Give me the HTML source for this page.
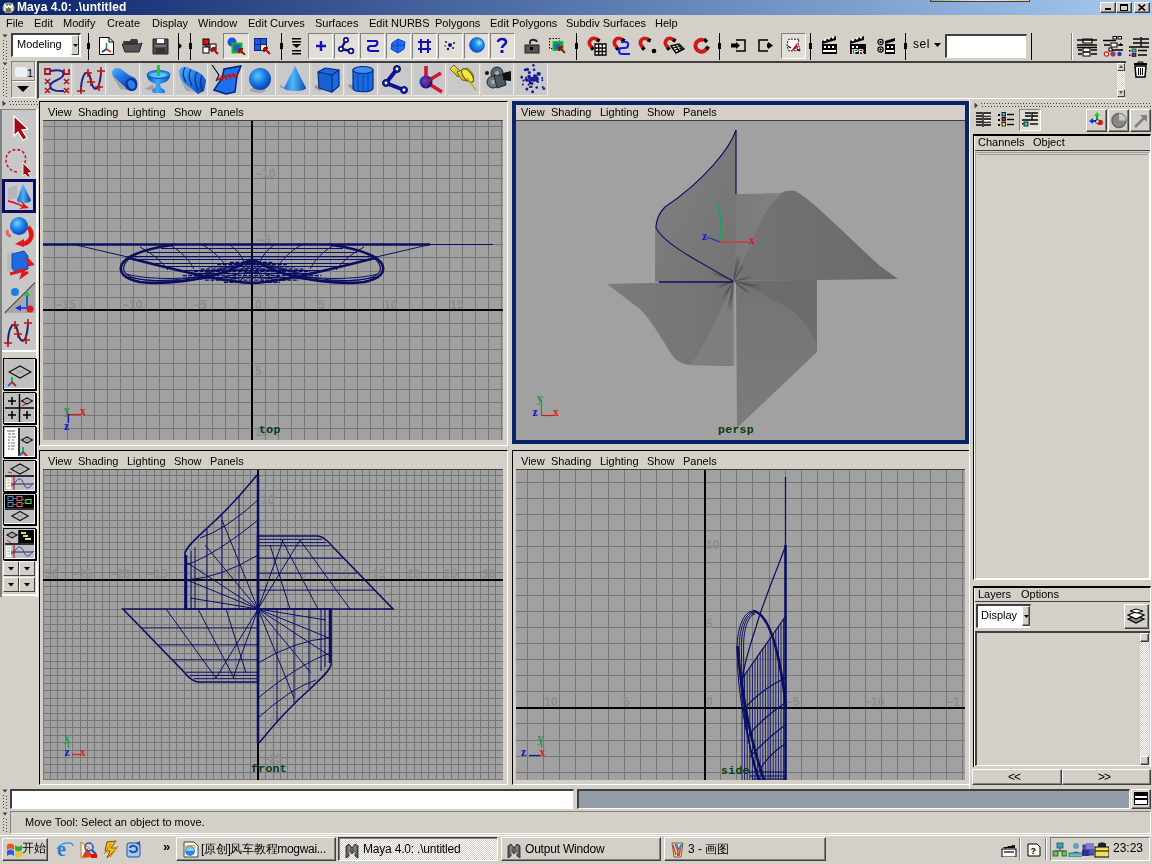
<!DOCTYPE html><html><head><meta charset="utf-8"><style>
*{margin:0;padding:0;box-sizing:border-box}
html,body{width:1152px;height:864px;overflow:hidden;background:#D4D0C8;font-family:"Liberation Sans",sans-serif;font-size:11px;color:#000;-webkit-font-smoothing:antialiased}
.t{position:absolute;white-space:nowrap;line-height:13px;will-change:transform}
.vm{position:absolute;white-space:nowrap;font-size:11px;line-height:13px}
</style></head><body><div style="position:absolute;left:0px;top:0px;width:1152px;height:15px;background:linear-gradient(to right,#0A246A 0%,#A6CAF0 100%)"></div><svg style="position:absolute;left:2px;top:2px;" width="13" height="11" viewBox="0 0 13 11"><ellipse cx="6.5" cy="6" rx="5.5" ry="5" fill="#6A7048" stroke="#C8CCB0" stroke-width="1"/><path d="M3 9V3L5 5.5L6.5 3.5L8 5.5L10 3V9" stroke="#fff" stroke-width="1.5" fill="none"/></svg><div class="t" style="left:17px;top:1px;color:#fff;font-weight:bold;font-size:12px;letter-spacing:0.1px">Maya 4.0: .\untitled</div><div style="position:absolute;left:930px;top:0px;width:100px;height:2px;background:linear-gradient(to right,#8AB080,#F0E8D0,#E0C8A0);border:1px solid #404040;border-top:none"></div><div style="position:absolute;left:1100px;top:2px;width:16px;height:11px;background:#D4D0C8;border-top:1px solid #fff;border-left:1px solid #fff;border-right:1px solid #404040;border-bottom:1px solid #404040;box-shadow:inset -1px -1px 0 #808080"></div><div style="position:absolute;left:1116px;top:2px;width:16px;height:11px;background:#D4D0C8;border-top:1px solid #fff;border-left:1px solid #fff;border-right:1px solid #404040;border-bottom:1px solid #404040;box-shadow:inset -1px -1px 0 #808080"></div><div style="position:absolute;left:1134px;top:2px;width:16px;height:11px;background:#D4D0C8;border-top:1px solid #fff;border-left:1px solid #fff;border-right:1px solid #404040;border-bottom:1px solid #404040;box-shadow:inset -1px -1px 0 #808080"></div><svg style="position:absolute;left:1105px;top:8px;" width="6" height="2" viewBox="0 0 6 2"><rect width="6" height="2" fill="#000"/></svg><svg style="position:absolute;left:1120px;top:4px;" width="8" height="7" viewBox="0 0 8 7"><rect x="0.5" y="0.5" width="7" height="6" fill="none" stroke="#000"/><rect x="0" y="0" width="8" height="2" fill="#000"/></svg><svg style="position:absolute;left:1138px;top:4px;" width="8" height="7" viewBox="0 0 8 7"><path d="M0.5 0.5L7 6.5M7 0.5L0.5 6.5" stroke="#000" stroke-width="1.6"/></svg><div class="t" style="left:6px;top:17px;">File</div><div class="t" style="left:34px;top:17px;">Edit</div><div class="t" style="left:63px;top:17px;">Modify</div><div class="t" style="left:107px;top:17px;">Create</div><div class="t" style="left:152px;top:17px;">Display</div><div class="t" style="left:198px;top:17px;">Window</div><div class="t" style="left:248px;top:17px;">Edit Curves</div><div class="t" style="left:315px;top:17px;">Surfaces</div><div class="t" style="left:369px;top:17px;">Edit NURBS</div><div class="t" style="left:435px;top:17px;">Polygons</div><div class="t" style="left:490px;top:17px;">Edit Polygons</div><div class="t" style="left:566px;top:17px;">Subdiv Surfaces</div><div class="t" style="left:655px;top:17px;">Help</div><svg style="position:absolute;left:2px;top:34px;" width="6" height="26" viewBox="0 0 6 26"><path d="M0.5 0.5H5.5L3 3.5Z" fill="#404040"/><rect x="1" y="6" width="1" height="1" fill="#404040"/><rect x="4" y="7" width="1" height="1" fill="#404040"/><rect x="1" y="9" width="1" height="1" fill="#404040"/><rect x="4" y="10" width="1" height="1" fill="#404040"/><rect x="1" y="12" width="1" height="1" fill="#404040"/><rect x="4" y="13" width="1" height="1" fill="#404040"/><rect x="1" y="15" width="1" height="1" fill="#404040"/><rect x="4" y="16" width="1" height="1" fill="#404040"/><rect x="1" y="18" width="1" height="1" fill="#404040"/><rect x="4" y="19" width="1" height="1" fill="#404040"/><rect x="1" y="21" width="1" height="1" fill="#404040"/><rect x="4" y="22" width="1" height="1" fill="#404040"/><rect x="1" y="24" width="1" height="1" fill="#404040"/><rect x="4" y="25" width="1" height="1" fill="#404040"/></svg><div style="position:absolute;left:11px;top:33px;width:70px;height:24px;background:#fff;border-top:2px solid #404040;border-left:2px solid #404040;border-bottom:1px solid #fff;border-right:1px solid #fff"></div><div style="position:absolute;left:71px;top:35px;width:8px;height:20px;background:#D4D0C8;border-top:1px solid #fff;border-left:1px solid #fff;border-right:1px solid #404040;border-bottom:1px solid #404040"></div><svg style="position:absolute;left:73px;top:44px;" width="5" height="3" viewBox="0 0 5 3"><path d="M0 0H5L2.5 3Z" fill="#000"/></svg><div class="t" style="left:17px;top:38px;font-size:11px">Modeling</div><svg style="position:absolute;left:87px;top:33px;" width="3" height="27" viewBox="0 0 3 27"><rect x="1" y="0" width="1" height="27" fill="#000"/><rect x="0" y="10" width="3" height="6" fill="#000"/></svg><svg style="position:absolute;left:99px;top:37px;" width="15" height="18" viewBox="0 0 15 18"><path d="M0.5 0.5H10L14.5 5V17.5H0.5Z" fill="#fff" stroke="#000"/><path d="M10 0.5V5H14.5" fill="none" stroke="#000"/><path d="M7.5 12V6" stroke="#2A8A4A" stroke-width="1.5"/><path d="M7.5 12L3 15" stroke="#2030A0" stroke-width="1.8"/><path d="M7.5 12L12 15" stroke="#D04020" stroke-width="1.8"/></svg><svg style="position:absolute;left:122px;top:38px;" width="21" height="15" viewBox="0 0 21 15"><path d="M1 3H8L9 1H15L16 3V13H3Z" fill="#3A3A3A"/><path d="M0 6H17L20 5L17 14H3Z" fill="#555" stroke="#222" stroke-width="1"/></svg><svg style="position:absolute;left:152px;top:38px;" width="17" height="17" viewBox="0 0 17 17"><path d="M1 1H16V16H1Z" fill="#4A4A4A" stroke="#222"/><rect x="5" y="1" width="7" height="4" fill="#fff"/><rect x="3" y="7" width="11" height="2" fill="#777"/><rect x="4" y="10" width="9" height="5" fill="#333"/></svg><svg style="position:absolute;left:178px;top:33px;" width="5" height="27" viewBox="0 0 5 27"><rect x="0" y="0" width="1" height="27" fill="#000"/><path d="M1 10L4 13L1 16Z" fill="#000"/></svg><svg style="position:absolute;left:189px;top:33px;" width="3" height="27" viewBox="0 0 3 27"><rect x="1" y="0" width="1" height="27" fill="#000"/><rect x="0" y="10" width="3" height="6" fill="#000"/></svg><svg style="position:absolute;left:202px;top:38px;" width="18" height="17" viewBox="0 0 18 17"><rect x="1" y="1" width="6" height="6" fill="#E01010" stroke="#000"/><path d="M4 7V9H12V7" stroke="#000" fill="none"/><rect x="1" y="9" width="6" height="6" fill="#fff" stroke="#000"/><rect x="8" y="6" width="6" height="6" fill="#fff" stroke="#000"/><path d="M10 10L16 16M10 10V14M10 10H14" stroke="#A01010" stroke-width="2" fill="none"/></svg><div style="position:absolute;left:223px;top:33px;width:26px;height:26px;background:#E2DFD9;border-top:1px solid #808080;border-left:1px solid #808080;border-right:1px solid #fff;border-bottom:1px solid #fff"></div><svg style="position:absolute;left:227px;top:37px;" width="19" height="18" viewBox="0 0 19 18"><circle cx="5" cy="5" r="4.5" fill="#2050E0"/><rect x="5.5" y="6.5" width="9" height="9" fill="#2060D0" stroke="#10C010" stroke-width="2"/><path d="M12 12L18 18M12 12V16M12 12H16" stroke="#A01010" stroke-width="2" fill="none"/></svg><svg style="position:absolute;left:254px;top:38px;" width="17" height="17" viewBox="0 0 17 17"><rect x="0.5" y="0.5" width="12" height="12" fill="#1A5AE0" stroke="#102080"/><path d="M6.5 0.5V12.5M0.5 6.5H12.5" stroke="#102080"/><rect x="7" y="7" width="5" height="5" fill="#F0F070"/><path d="M10 10L16 16M10 10V14M10 10H14" stroke="#A01010" stroke-width="2" fill="none"/></svg><svg style="position:absolute;left:280px;top:33px;" width="3" height="27" viewBox="0 0 3 27"><rect x="1" y="0" width="1" height="27" fill="#000"/><rect x="0" y="10" width="3" height="6" fill="#000"/></svg><svg style="position:absolute;left:292px;top:38px;" width="10" height="17" viewBox="0 0 10 17"><rect x="0" y="0" width="9" height="1.5" fill="#000"/><rect x="0" y="3" width="9" height="1.5" fill="#000"/><path d="M0 6H9L4.5 10Z" fill="#000"/><rect x="0" y="12" width="9" height="1.5" fill="#000"/><rect x="0" y="15" width="9" height="1.5" fill="#000"/></svg><div style="position:absolute;left:308px;top:33px;width:25px;height:26px;background:#E2DFD9;border-top:1px solid #808080;border-left:1px solid #808080;border-right:1px solid #fff;border-bottom:1px solid #fff"></div><div style="position:absolute;left:334px;top:33px;width:25px;height:26px;background:#E2DFD9;border-top:1px solid #808080;border-left:1px solid #808080;border-right:1px solid #fff;border-bottom:1px solid #fff"></div><div style="position:absolute;left:360px;top:33px;width:25px;height:26px;background:#E2DFD9;border-top:1px solid #808080;border-left:1px solid #808080;border-right:1px solid #fff;border-bottom:1px solid #fff"></div><div style="position:absolute;left:386px;top:33px;width:25px;height:26px;background:#E2DFD9;border-top:1px solid #808080;border-left:1px solid #808080;border-right:1px solid #fff;border-bottom:1px solid #fff"></div><div style="position:absolute;left:412px;top:33px;width:25px;height:26px;background:#E2DFD9;border-top:1px solid #808080;border-left:1px solid #808080;border-right:1px solid #fff;border-bottom:1px solid #fff"></div><div style="position:absolute;left:438px;top:33px;width:25px;height:26px;background:#E2DFD9;border-top:1px solid #808080;border-left:1px solid #808080;border-right:1px solid #fff;border-bottom:1px solid #fff"></div><div style="position:absolute;left:464px;top:33px;width:25px;height:26px;background:#E2DFD9;border-top:1px solid #808080;border-left:1px solid #808080;border-right:1px solid #fff;border-bottom:1px solid #fff"></div><div style="position:absolute;left:490px;top:33px;width:25px;height:26px;background:#E2DFD9;border-top:1px solid #808080;border-left:1px solid #808080;border-right:1px solid #fff;border-bottom:1px solid #fff"></div><svg style="position:absolute;left:314px;top:38px;" width="14" height="16" viewBox="0 0 14 16"><path d="M7 3V13M2 8H12" stroke="#1010C0" stroke-width="2.4"/></svg><svg style="position:absolute;left:338px;top:37px;" width="17" height="18" viewBox="0 0 17 18"><path d="M8 3L3 12L13 14" stroke="#101080" stroke-width="2.5" fill="none"/><circle cx="8" cy="3" r="2.2" fill="#fff" stroke="#101080" stroke-width="1.8"/><circle cx="3" cy="12" r="2.2" fill="#fff" stroke="#101080" stroke-width="1.8"/><circle cx="13" cy="14" r="2.4" fill="#fff" stroke="#101080" stroke-width="1.8"/></svg><svg style="position:absolute;left:365px;top:38px;" width="15" height="16" viewBox="0 0 15 16"><path d="M2 3H11C13 3 13 8 9 8H6C2 8 2 13 6 13H14" stroke="#1010C0" stroke-width="2.2" fill="none"/></svg><svg style="position:absolute;left:390px;top:38px;" width="16" height="16" viewBox="0 0 16 16"><path d="M2 5L8 1L15 4L14 11L8 15L1 11Z" fill="#1A70F0" stroke="#0A40C0"/><path d="M8 1L7 15M1.5 8L14.5 7" stroke="#0A40C0" stroke-width="0.8"/></svg><svg style="position:absolute;left:417px;top:38px;" width="15" height="16" viewBox="0 0 15 16"><path d="M4 1V15M11 1V15M1 4H14M1 11H14" stroke="#1010C0" stroke-width="2"/></svg><svg style="position:absolute;left:443px;top:39px;" width="14" height="13" viewBox="0 0 14 13"><circle cx="7" cy="6" r="2" fill="#101080"/><circle cx="3" cy="3" r="1" fill="#101080"/><circle cx="11" cy="4" r="1" fill="#101080"/><circle cx="5" cy="10" r="1.2" fill="#101080"/><circle cx="10" cy="9" r="1" fill="#101080"/><circle cx="2" cy="7" r="0.8" fill="#101080"/></svg><svg style="position:absolute;left:469px;top:37px;" width="16" height="16" viewBox="0 0 16 16"><defs><radialGradient id="sph" cx="0.65" cy="0.35" r="0.7"><stop offset="0" stop-color="#A0F0FF"/><stop offset="0.35" stop-color="#20A0F0"/><stop offset="1" stop-color="#0A50D0"/></radialGradient></defs><circle cx="8" cy="8" r="7.3" fill="url(#sph)" stroke="#0A3AB0" stroke-width="0.8"/></svg><svg style="position:absolute;left:496px;top:37px;" width="12" height="18" viewBox="0 0 12 18"><path d="M2 5C2 1 10 1 10 5C10 8 6 8 6 11" stroke="#1010C0" stroke-width="2.6" fill="none"/><rect x="4.5" y="13" width="3" height="3" fill="#1010C0"/></svg><svg style="position:absolute;left:524px;top:38px;" width="16" height="16" viewBox="0 0 16 16"><path d="M6 6V4C6 1 12 1 13 4" stroke="#222" stroke-width="1.8" fill="none"/><rect x="1" y="7" width="14" height="8" fill="#555" stroke="#222"/><rect x="6" y="9" width="3" height="3" fill="#000"/></svg><svg style="position:absolute;left:549px;top:38px;" width="17" height="17" viewBox="0 0 17 17"><rect x="0.5" y="0.5" width="10" height="10" fill="none" stroke="#000" stroke-dasharray="1.5 1.5"/><rect x="4" y="3.5" width="10" height="9" fill="#1A9A4A" stroke="#10D030"/><rect x="6" y="6" width="5" height="5" fill="#2060C0"/><path d="M10 9L16 15M10 9V13M10 9H14" stroke="#A01010" stroke-width="2" fill="none"/></svg><svg style="position:absolute;left:575px;top:33px;" width="3" height="27" viewBox="0 0 3 27"><rect x="1" y="0" width="1" height="27" fill="#000"/><rect x="0" y="10" width="3" height="6" fill="#000"/></svg><svg style="position:absolute;left:587px;top:36px;" width="22" height="20" viewBox="0 0 22 20"><g transform="rotate(-30 7 7)"><path d="M3 10L2.5 7A4.5 4.5 0 0 1 10.5 4L12 6.5" stroke="#D01818" stroke-width="3.6" fill="none" stroke-linecap="butt"/><path d="M2.6 9.5L3 12.5M11.3 5.5L13 8" stroke="#000" stroke-width="3.6"/></g><path d="M8 8H19V19H8ZM8 12H19M8 15.5H19M11.7 8V19M15.3 8V19" stroke="#000" stroke-width="1.3" fill="#fff"/></svg><svg style="position:absolute;left:612px;top:36px;" width="20" height="21" viewBox="0 0 20 21"><g transform="rotate(-30 7 7)"><path d="M3 10L2.5 7A4.5 4.5 0 0 1 10.5 4L12 6.5" stroke="#D01818" stroke-width="3.6" fill="none" stroke-linecap="butt"/><path d="M2.6 9.5L3 12.5M11.3 5.5L13 8" stroke="#000" stroke-width="3.6"/></g><path d="M9 6H14C17 6 17 12 13 12H10C6 12 6 18 10 18H18" stroke="#1020F0" stroke-width="2.2" fill="none"/></svg><svg style="position:absolute;left:638px;top:36px;" width="20" height="20" viewBox="0 0 20 20"><g transform="rotate(-30 7 7)"><path d="M3 10L2.5 7A4.5 4.5 0 0 1 10.5 4L12 6.5" stroke="#D01818" stroke-width="3.6" fill="none" stroke-linecap="butt"/><path d="M2.6 9.5L3 12.5M11.3 5.5L13 8" stroke="#000" stroke-width="3.6"/></g><circle cx="16" cy="15" r="2.3" fill="#000"/></svg><svg style="position:absolute;left:663px;top:36px;" width="22" height="21" viewBox="0 0 22 21"><g transform="rotate(-30 7 7)"><path d="M3 10L2.5 7A4.5 4.5 0 0 1 10.5 4L12 6.5" stroke="#D01818" stroke-width="3.6" fill="none" stroke-linecap="butt"/><path d="M2.6 9.5L3 12.5M11.3 5.5L13 8" stroke="#000" stroke-width="3.6"/></g><path d="M8 10L16 8L21 13L13 17Z" fill="#fff" stroke="#000" stroke-width="1.5"/><path d="M10 12L18 10M12 14L20 12M12 9L16 15M15 8.5L19 14" stroke="#000" stroke-width="1.2"/></svg><svg style="position:absolute;left:692px;top:37px;" width="18" height="18" viewBox="0 0 18 18"><path d="M14 5A6 6 0 1 0 14 13" stroke="#D01818" stroke-width="4" fill="none" transform="rotate(-30 9 9)"/><path d="M12 2L15 5M14 10L17 12" stroke="#111" stroke-width="3.5"/></svg><svg style="position:absolute;left:718px;top:33px;" width="3" height="27" viewBox="0 0 3 27"><rect x="1" y="0" width="1" height="27" fill="#000"/><rect x="0" y="10" width="3" height="6" fill="#000"/></svg><svg style="position:absolute;left:731px;top:39px;" width="15" height="13" viewBox="0 0 15 13"><path d="M5 1H14V12H5" fill="none" stroke="#000" stroke-width="1.5"/><rect x="0" y="4.5" width="6" height="4" fill="#000"/><path d="M5 3L9 6.5L5 10Z" fill="#000"/></svg><svg style="position:absolute;left:758px;top:39px;" width="16" height="13" viewBox="0 0 16 13"><path d="M10 1H1V12H10" fill="none" stroke="#000" stroke-width="1.5"/><rect x="9" y="4.5" width="3" height="4" fill="#000"/><path d="M10 3L15 6.5L10 10Z" fill="#000"/></svg><div style="position:absolute;left:781px;top:33px;width:25px;height:26px;background:#E2DFD9;border-top:1px solid #808080;border-left:1px solid #808080;border-right:1px solid #fff;border-bottom:1px solid #fff"></div><svg style="position:absolute;left:785px;top:37px;" width="17" height="18" viewBox="0 0 17 18"><path d="M3 3C5 1 11 3 14 2L13 6L15 13L4 14L2 9Z" fill="#fff" stroke="#111" stroke-width="1" stroke-dasharray="2 1"/><path d="M6 14L12 6L13 11Z" fill="#E01020"/><path d="M3 9L6 11M12 12L15 14" stroke="#111" stroke-width="1.5"/></svg><svg style="position:absolute;left:809px;top:33px;" width="3" height="27" viewBox="0 0 3 27"><rect x="1" y="0" width="1" height="27" fill="#000"/><rect x="0" y="10" width="3" height="6" fill="#000"/></svg><svg style="position:absolute;left:821px;top:35px;" width="17" height="20" viewBox="0 0 17 20"><path d="M1 6L15 1V5L1 9Z" fill="#000"/><rect x="3" y="4" width="2" height="2" fill="#fff" transform="rotate(-18 4 5)"/><rect x="7" y="2.5" width="2" height="2" fill="#fff" transform="rotate(-18 8 3.5)"/><rect x="11" y="1.5" width="2" height="2" fill="#fff" transform="rotate(-18 12 2.5)"/><rect x="1" y="9" width="15" height="10" fill="#000"/><rect x="3" y="11" width="2" height="2" fill="#fff"/><rect x="7" y="11" width="2" height="2" fill="#fff"/><rect x="11" y="11" width="2" height="2" fill="#fff"/><rect x="2" y="15" width="13" height="2" fill="#fff"/></svg><svg style="position:absolute;left:849px;top:35px;" width="18" height="20" viewBox="0 0 18 20"><path d="M1 6L15 1V5L1 9Z" fill="#000"/><rect x="3" y="4" width="2" height="2" fill="#fff" transform="rotate(-18 4 5)"/><rect x="7" y="2.5" width="2" height="2" fill="#fff" transform="rotate(-18 8 3.5)"/><rect x="11" y="1.5" width="2" height="2" fill="#fff" transform="rotate(-18 12 2.5)"/><rect x="1" y="9" width="16" height="10" fill="#000"/><rect x="3" y="11" width="2" height="2" fill="#fff"/><rect x="7" y="11" width="2" height="2" fill="#fff"/><text x="2.5" y="18.5" fill="#fff" font-family="Liberation Sans" font-size="7.5" font-weight="bold">IPR</text></svg><svg style="position:absolute;left:877px;top:35px;" width="19" height="20" viewBox="0 0 19 20"><circle cx="3.5" cy="7" r="2.6" fill="#fff" stroke="#000" stroke-width="1.2"/><circle cx="3.5" cy="7" r="1.2" fill="#000"/><circle cx="3.5" cy="14.5" r="2.6" fill="#fff" stroke="#000" stroke-width="1.2"/><circle cx="3.5" cy="14.5" r="1.2" fill="#000"/><path d="M8 6L18 3V6L8 9Z" fill="#000"/><rect x="8" y="9" width="10" height="10" fill="#000"/><rect x="10" y="11" width="2" height="2" fill="#fff"/><rect x="14" y="11" width="2" height="2" fill="#fff"/><rect x="9" y="15" width="8" height="2" fill="#fff"/></svg><svg style="position:absolute;left:904px;top:33px;" width="3" height="27" viewBox="0 0 3 27"><rect x="1" y="0" width="1" height="27" fill="#000"/><rect x="0" y="10" width="3" height="6" fill="#000"/></svg><div class="t" style="left:913px;top:38px;font-size:12px;letter-spacing:0.5px">sel</div><svg style="position:absolute;left:934px;top:43px;" width="8" height="5" viewBox="0 0 8 5"><path d="M0 0H7L3.5 4Z" fill="#000"/></svg><div style="position:absolute;left:945px;top:34px;width:82px;height:24px;background:#fff;border-top:2px solid #404040;border-left:2px solid #404040;border-right:1px solid #D4D0C8;border-bottom:1px solid #fff"></div><div style="position:absolute;left:1031px;top:33px;width:1px;height:27px;background:#000"></div><div style="position:absolute;left:1071px;top:33px;width:1px;height:27px;background:#808080"></div><div style="position:absolute;left:1072px;top:33px;width:1px;height:27px;background:#fff"></div><svg style="position:absolute;left:1077px;top:36px;" width="21" height="21" viewBox="0 0 21 21"><path d="M6 3H15V7H6Z" fill="#fff" stroke="#000" stroke-width="1.2"/><path d="M0 4H20M0 9H20M0 11.5H20" stroke="#000" stroke-width="1.3"/><rect x="6" y="12" width="7" height="8" fill="#fff" stroke="#000"/><path d="M6 16H13M1 14H5M14 14H20M1 18H5M14 18H20" stroke="#000" stroke-width="1.3"/></svg><svg style="position:absolute;left:1103px;top:36px;" width="21" height="21" viewBox="0 0 21 21"><path d="M0 4.5H13M1 9H7M16 9H20M7 14H20" stroke="#000" stroke-width="1.3"/><rect x="10" y="0.5" width="3.5" height="2.5" fill="#fff" stroke="#000"/><rect x="15" y="0.5" width="3.5" height="2.5" fill="#fff" stroke="#000"/><rect x="8" y="7" width="6" height="4" fill="#fff" stroke="#000"/><path d="M14 9H19L17 7" stroke="#000" fill="none"/><rect x="6" y="12" width="3" height="3" fill="#fff" stroke="#000"/><circle cx="3.5" cy="18" r="2.2" fill="#fff" stroke="#D02020" stroke-width="1.2"/><circle cx="10" cy="18" r="2.2" fill="#5050C0" stroke="#D02020" stroke-width="1"/><circle cx="16.5" cy="18" r="2.2" fill="#3030C0"/></svg><svg style="position:absolute;left:1129px;top:36px;" width="21" height="21" viewBox="0 0 21 21"><path d="M4 3H11M4 7H11M0 11H20M12 1V11M12 3H20M12 7H20" stroke="#000" stroke-width="1.4"/><rect x="3" y="13" width="4" height="3" fill="#30D0C0" stroke="#000" stroke-width="0.6"/><rect x="3" y="17.5" width="4" height="3" fill="#802080" stroke="#000" stroke-width="0.6"/><path d="M9 14.5H18M9 19H18" stroke="#000" stroke-width="1.4"/><rect x="0" y="14" width="1.5" height="1.5" fill="#000"/><rect x="0" y="18.5" width="1.5" height="1.5" fill="#000"/></svg><svg style="position:absolute;left:2px;top:62px;" width="6" height="36" viewBox="0 0 6 36"><path d="M0.5 0.5H5.5L3 3.5Z" fill="#404040"/><rect x="1" y="6" width="1" height="1" fill="#404040"/><rect x="4" y="7" width="1" height="1" fill="#404040"/><rect x="1" y="9" width="1" height="1" fill="#404040"/><rect x="4" y="10" width="1" height="1" fill="#404040"/><rect x="1" y="12" width="1" height="1" fill="#404040"/><rect x="4" y="13" width="1" height="1" fill="#404040"/><rect x="1" y="15" width="1" height="1" fill="#404040"/><rect x="4" y="16" width="1" height="1" fill="#404040"/><rect x="1" y="18" width="1" height="1" fill="#404040"/><rect x="4" y="19" width="1" height="1" fill="#404040"/><rect x="1" y="21" width="1" height="1" fill="#404040"/><rect x="4" y="22" width="1" height="1" fill="#404040"/><rect x="1" y="24" width="1" height="1" fill="#404040"/><rect x="4" y="25" width="1" height="1" fill="#404040"/><rect x="1" y="27" width="1" height="1" fill="#404040"/><rect x="4" y="28" width="1" height="1" fill="#404040"/><rect x="1" y="30" width="1" height="1" fill="#404040"/><rect x="4" y="31" width="1" height="1" fill="#404040"/><rect x="1" y="33" width="1" height="1" fill="#404040"/><rect x="4" y="34" width="1" height="1" fill="#404040"/></svg><div style="position:absolute;left:11px;top:61px;width:25px;height:37px;border-top:1px solid #808080;border-left:1px solid #808080;border-right:1px solid #fff;border-bottom:1px solid #fff"></div><div style="position:absolute;left:12px;top:62px;width:23px;height:19px;background:#D4D0C8;border-right:1px solid #808080;border-bottom:1px solid #808080"></div><svg style="position:absolute;left:14px;top:65px;" width="20" height="14" viewBox="0 0 20 14"><rect x="1" y="2" width="12" height="10" rx="2.5" fill="#EEF0F8"/><text x="13" y="11.5" font-family="Liberation Sans" font-size="11" fill="#000">1</text></svg><div style="position:absolute;left:12px;top:81px;width:23px;height:16px;background:#D4D0C8;border-top:1px solid #fff"></div><svg style="position:absolute;left:17px;top:86px;" width="13" height="7" viewBox="0 0 13 7"><path d="M0 0H12L6 6Z" fill="#000"/></svg><div style="position:absolute;left:37px;top:61px;width:1089px;height:38px;border-top:2px solid #404040;border-left:2px solid #404040;border-bottom:1px solid #fff"></div><div style="position:absolute;left:40px;top:63px;width:32px;height:33px;background:#C9C9C9;border-right:1px solid #E8E8E8;border-bottom:1px solid #E8E8E8"></div><div style="position:absolute;left:74px;top:63px;width:32px;height:33px;background:#C9C9C9;border-right:1px solid #E8E8E8;border-bottom:1px solid #E8E8E8"></div><div style="position:absolute;left:108px;top:63px;width:32px;height:33px;background:#C9C9C9;border-right:1px solid #E8E8E8;border-bottom:1px solid #E8E8E8"></div><div style="position:absolute;left:142px;top:63px;width:32px;height:33px;background:#C9C9C9;border-right:1px solid #E8E8E8;border-bottom:1px solid #E8E8E8"></div><div style="position:absolute;left:176px;top:63px;width:32px;height:33px;background:#C9C9C9;border-right:1px solid #E8E8E8;border-bottom:1px solid #E8E8E8"></div><div style="position:absolute;left:210px;top:63px;width:32px;height:33px;background:#C9C9C9;border-right:1px solid #E8E8E8;border-bottom:1px solid #E8E8E8"></div><div style="position:absolute;left:244px;top:63px;width:32px;height:33px;background:#C9C9C9;border-right:1px solid #E8E8E8;border-bottom:1px solid #E8E8E8"></div><div style="position:absolute;left:278px;top:63px;width:32px;height:33px;background:#C9C9C9;border-right:1px solid #E8E8E8;border-bottom:1px solid #E8E8E8"></div><div style="position:absolute;left:312px;top:63px;width:32px;height:33px;background:#C9C9C9;border-right:1px solid #E8E8E8;border-bottom:1px solid #E8E8E8"></div><div style="position:absolute;left:346px;top:63px;width:32px;height:33px;background:#C9C9C9;border-right:1px solid #E8E8E8;border-bottom:1px solid #E8E8E8"></div><div style="position:absolute;left:380px;top:63px;width:32px;height:33px;background:#C9C9C9;border-right:1px solid #E8E8E8;border-bottom:1px solid #E8E8E8"></div><div style="position:absolute;left:414px;top:63px;width:32px;height:33px;background:#C9C9C9;border-right:1px solid #E8E8E8;border-bottom:1px solid #E8E8E8"></div><div style="position:absolute;left:448px;top:63px;width:32px;height:33px;background:#C9C9C9;border-right:1px solid #E8E8E8;border-bottom:1px solid #E8E8E8"></div><div style="position:absolute;left:482px;top:63px;width:32px;height:33px;background:#C9C9C9;border-right:1px solid #E8E8E8;border-bottom:1px solid #E8E8E8"></div><div style="position:absolute;left:516px;top:63px;width:32px;height:33px;background:#C9C9C9;border-right:1px solid #E8E8E8;border-bottom:1px solid #E8E8E8"></div><svg style="position:absolute;left:42px;top:66px;" width="30" height="28" viewBox="0 0 30 28"><path d="M3 3H8V8H3ZM22 3V8H27V3" fill="none" stroke="#B01818" stroke-width="1.8"/><path d="M3 13L8 18M8 13L3 18M3 22L8 27M8 22L3 27M22 13L27 18M27 13L22 18M22 22L27 27M27 22L22 27" stroke="#B01818" stroke-width="1.6"/><path d="M8 5C25 2 24 10 15 14C5 18 5 26 22 25" stroke="#202090" stroke-width="2" fill="none"/></svg><svg style="position:absolute;left:76px;top:66px;" width="30" height="28" viewBox="0 0 30 28"><path d="M5 25C5 12 9 5 12 7C15 9 14 18 18 22C21 25 24 20 25 6" stroke="#202090" stroke-width="2" fill="none"/><path d="M1 25H9M5 21V29M8 7H16M12 3V11M11 16H19M15 12V20M19 21H27M23 17V25M21 5H29M25 1V9" stroke="#B01818" stroke-width="1.6"/></svg><svg style="position:absolute;left:108px;top:63px;" width="32" height="33" viewBox="0 0 32 33"><defs><linearGradient id="bl1" x1="0" y1="0" x2="0.6" y2="1"><stop offset="0" stop-color="#50B0FF"/><stop offset="0.5" stop-color="#1A70E0"/><stop offset="1" stop-color="#0A3A9A"/></linearGradient></defs><path d="M5 14L12 26L20 27Z" fill="#8A8A8A" opacity="0.6"/><path d="M4 9C5 5 10 4 13 6L21 12L27 15C31 19 30 27 24 28C21 28 18 26 17 24L8 16C5 14 4 12 4 9Z" fill="url(#bl1)"/><ellipse cx="23.5" cy="21.5" rx="5.5" ry="6.5" fill="#0A3090" transform="rotate(-30 23.5 21.5)"/><ellipse cx="23.5" cy="21.5" rx="3.5" ry="4.5" fill="#2A80E8" transform="rotate(-30 23.5 21.5)"/></svg><svg style="position:absolute;left:142px;top:63px;" width="32" height="33" viewBox="0 0 32 33"><defs><linearGradient id="bl2" x1="0" y1="0" x2="1" y2="0"><stop offset="0" stop-color="#0A50C0"/><stop offset="0.45" stop-color="#40A8F8"/><stop offset="1" stop-color="#0A50C0"/></linearGradient></defs><path d="M3 26L11 21L13 28Z" fill="#8A8A8A" opacity="0.6"/><path d="M5 12C5 18 11 20 14 21L13 25C10 26 9 29 12 30H22C25 29 22 26 19 25L18 21C22 20 28 18 28 12Z" fill="url(#bl2)"/><ellipse cx="16.5" cy="11.5" rx="11.5" ry="4" fill="#2A90F0" stroke="#0A40B0" stroke-width="0.8"/><ellipse cx="16.5" cy="12" rx="8" ry="2.5" fill="#60C0FF"/><rect x="15" y="2" width="3" height="11" fill="#20D020"/></svg><svg style="position:absolute;left:176px;top:63px;" width="32" height="33" viewBox="0 0 32 33"><defs><linearGradient id="bl3" x1="0" y1="0" x2="1" y2="1"><stop offset="0" stop-color="#50B0F8"/><stop offset="0.6" stop-color="#1A70E0"/><stop offset="1" stop-color="#0A3A9A"/></linearGradient></defs><path d="M4 16L18 29L10 28Z" fill="#8A8A8A" opacity="0.5"/><path d="M3 9C3 5 7 3 11 4L22 9C26 11 29 14 30 18L28 28L22 31L8 20C5 17 3 13 3 9Z" fill="url(#bl3)"/><path d="M9 4.5C6 9 7 15 10 19M15 6.5C12 11 13 17 16 23M21 9C18 14 19 21 22 27M26 12C24 17 24 23 27 28" stroke="#0A3090" stroke-width="1.3" fill="none"/></svg><svg style="position:absolute;left:210px;top:63px;" width="32" height="33" viewBox="0 0 32 33"><path d="M14 6L31 3L27 13L25 29L16 31L4 27L12 15Z" fill="#1A70F0" stroke="#0A2070" stroke-width="1.5"/><path d="M2 2L9 12L6 18" stroke="#111" stroke-width="1.2" fill="none"/><path d="M7 17C12 14 20 12 28 12" stroke="#C01818" stroke-width="2" fill="none"/><path d="M11 13L13 18M15 12L17 17M19 11L21 16M23 10L25 15" stroke="#C01818" stroke-width="1.6"/></svg><svg style="position:absolute;left:246px;top:66px;" width="28" height="28" viewBox="0 0 28 28"><defs><radialGradient id="sp2" cx="0.4" cy="0.35" r="0.65"><stop offset="0" stop-color="#60C8FF"/><stop offset="0.5" stop-color="#1A80E8"/><stop offset="1" stop-color="#0A40B0"/></radialGradient></defs><ellipse cx="12" cy="24" rx="8" ry="3" fill="#888" opacity="0.5"/><circle cx="14" cy="13" r="11" fill="url(#sp2)"/></svg><svg style="position:absolute;left:280px;top:64px;" width="28" height="30" viewBox="0 0 28 30"><defs><linearGradient id="cn" x1="0" y1="0" x2="1" y2="0"><stop offset="0" stop-color="#1A70E0"/><stop offset="0.4" stop-color="#50B8F8"/><stop offset="1" stop-color="#0A4AB0"/></linearGradient></defs><path d="M15 2L26 24C26 28 4 28 4 24Z" fill="url(#cn)"/><path d="M4 24L0 22" stroke="#777" stroke-width="2" opacity="0.5"/></svg><svg style="position:absolute;left:313px;top:66px;" width="30" height="28" viewBox="0 0 30 28"><path d="M2 20L8 24" stroke="#666" stroke-width="3" opacity="0.5"/><path d="M5 6L12 2L26 4L26 20L19 26L6 22Z" fill="#1A6AE0" stroke="#0A2A80" stroke-width="1.2"/><path d="M5 6L19 9L26 4M19 9V26" stroke="#0A2A80" stroke-width="1.2" fill="none"/><path d="M6 7L18 9.5V25L7 21Z" fill="#1660D0"/></svg><svg style="position:absolute;left:347px;top:65px;" width="30" height="29" viewBox="0 0 30 29"><path d="M2 20L7 24" stroke="#666" stroke-width="3" opacity="0.5"/><path d="M6 5V23C6 28 26 28 26 23V5Z" fill="#1A6AE0" stroke="#0A2A80" stroke-width="1.2"/><ellipse cx="16" cy="5" rx="10" ry="3.5" fill="#3A90F0" stroke="#0A2A80" stroke-width="1.2"/><path d="M11 8V26M16 9V27M21 8V26" stroke="#0A3A9A" stroke-width="0.8"/></svg><svg style="position:absolute;left:381px;top:64px;" width="30" height="30" viewBox="0 0 30 30"><path d="M16 5L5 19L23 26" stroke="#1010A0" stroke-width="4" fill="none"/><circle cx="16" cy="5" r="3.5" fill="#1020B0" stroke="#0A0A60"/><circle cx="5" cy="19" r="3.5" fill="#1020B0" stroke="#0A0A60"/><circle cx="23" cy="26" r="3.5" fill="#1020B0" stroke="#0A0A60"/><circle cx="16" cy="5" r="1.4" fill="#fff"/><circle cx="5" cy="19" r="1.4" fill="#fff"/><circle cx="23" cy="26" r="1.4" fill="#fff"/></svg><svg style="position:absolute;left:414px;top:63px;" width="32" height="33" viewBox="0 0 32 33"><path d="M12 3V19M12 19L27 10M12 19L28 29" stroke="#D01830" stroke-width="3.6"/><defs><radialGradient id="jb" cx="0.4" cy="0.4" r="0.6"><stop offset="0" stop-color="#5050E0"/><stop offset="1" stop-color="#10108A"/></radialGradient></defs><circle cx="12" cy="19" r="6.5" fill="url(#jb)"/><path d="M12 14V24M12 19L20 15" stroke="#D01830" stroke-width="2" opacity="0.7"/></svg><svg style="position:absolute;left:448px;top:63px;" width="32" height="33" viewBox="0 0 32 33"><defs><linearGradient id="yl" x1="0" y1="0" x2="1" y2="1"><stop offset="0" stop-color="#F8F060"/><stop offset="1" stop-color="#B0A000"/></linearGradient></defs><path d="M2 6L6 2L14 10L10 14Z" fill="url(#yl)" stroke="#5A5000" stroke-width="0.8"/><path d="M9 9L19 5C24 8 27 13 25 19L14 17Z" fill="url(#yl)" stroke="#5A5000" stroke-width="0.8"/><ellipse cx="19.5" cy="12.5" rx="4" ry="8" fill="#F0E840" stroke="#5A5000" stroke-width="1" transform="rotate(-40 19.5 12.5)"/><path d="M20 16L29 28L22 19Z" fill="#807000"/><path d="M19 15L28 27" stroke="#C0B000" stroke-width="1.5"/></svg><svg style="position:absolute;left:482px;top:63px;" width="32" height="33" viewBox="0 0 32 33"><circle cx="5" cy="10" r="2" fill="#111"/><circle cx="15" cy="10" r="6" fill="#5A6A70" stroke="#222"/><circle cx="11" cy="19" r="6" fill="#6A7A80" stroke="#222"/><path d="M12 12L22 12L24 22L15 25Z" fill="#4A5A60" stroke="#222"/><path d="M21 10L29 8V18L21 17Z" fill="#111"/><circle cx="15" cy="10" r="2" fill="#A0B0B8"/><circle cx="11" cy="19" r="2" fill="#A0B0B8"/></svg><svg style="position:absolute;left:516px;top:63px;" width="32" height="33" viewBox="0 0 32 33"><circle cx="12.6" cy="21.7" r="1.0" fill="#1A1A9A"/><circle cx="5.7" cy="14.0" r="1.3" fill="#1A1A9A"/><circle cx="18.3" cy="16.7" r="1.3" fill="#1A1A9A"/><circle cx="16.1" cy="16.0" r="1.0" fill="#1A1A9A"/><circle cx="14.1" cy="16.8" r="1.1" fill="#1A1A9A"/><circle cx="13.1" cy="13.5" r="1.8" fill="#1A1A9A"/><circle cx="16.8" cy="15.2" r="1.0" fill="#1A1A9A"/><circle cx="14.3" cy="19.8" r="1.7" fill="#1A1A9A"/><circle cx="20.7" cy="24.5" r="1.3" fill="#1A1A9A"/><circle cx="10.0" cy="14.4" r="1.0" fill="#1A1A9A"/><circle cx="19.5" cy="17.1" r="1.3" fill="#1A1A9A"/><circle cx="10.9" cy="26.0" r="1.5" fill="#1A1A9A"/><circle cx="11.3" cy="17.2" r="1.6" fill="#1A1A9A"/><circle cx="16.6" cy="28.7" r="1.5" fill="#1A1A9A"/><circle cx="5.8" cy="14.6" r="1.2" fill="#1A1A9A"/><circle cx="26.2" cy="14.9" r="1.0" fill="#1A1A9A"/><circle cx="15.8" cy="16.1" r="1.4" fill="#1A1A9A"/><circle cx="21.0" cy="17.0" r="1.6" fill="#1A1A9A"/><circle cx="17.5" cy="2.3" r="1.2" fill="#1A1A9A"/><circle cx="13.3" cy="9.6" r="1.5" fill="#1A1A9A"/><circle cx="20.4" cy="14.7" r="1.4" fill="#1A1A9A"/><circle cx="9.3" cy="6.7" r="1.5" fill="#1A1A9A"/><circle cx="21.2" cy="15.8" r="1.7" fill="#1A1A9A"/><circle cx="13.8" cy="24.2" r="0.9" fill="#1A1A9A"/><circle cx="7.5" cy="17.7" r="1.1" fill="#1A1A9A"/><circle cx="26.6" cy="24.0" r="1.0" fill="#1A1A9A"/><circle cx="16.1" cy="20.6" r="1.3" fill="#1A1A9A"/><circle cx="21.9" cy="10.8" r="1.4" fill="#1A1A9A"/><circle cx="19.5" cy="13.3" r="1.7" fill="#1A1A9A"/><circle cx="17.1" cy="15.0" r="1.3" fill="#1A1A9A"/><circle cx="22.9" cy="10.9" r="1.9" fill="#1A1A9A"/><circle cx="17.7" cy="18.0" r="1.1" fill="#1A1A9A"/><circle cx="10.2" cy="16.5" r="1.5" fill="#1A1A9A"/><circle cx="15.3" cy="23.8" r="1.3" fill="#1A1A9A"/><circle cx="15.8" cy="15.9" r="1.9" fill="#1A1A9A"/><circle cx="11.5" cy="6.4" r="1.6" fill="#1A1A9A"/><circle cx="17.1" cy="16.3" r="1.8" fill="#1A1A9A"/><circle cx="18.1" cy="6.7" r="1.3" fill="#1A1A9A"/><circle cx="6.8" cy="21.6" r="1.0" fill="#1A1A9A"/><circle cx="13.9" cy="14.1" r="1.1" fill="#1A1A9A"/><circle cx="16.7" cy="16.9" r="1.2" fill="#1A1A9A"/><circle cx="20.9" cy="17.4" r="1.0" fill="#1A1A9A"/><circle cx="16.0" cy="16.0" r="0.9" fill="#1A1A9A"/><circle cx="18.7" cy="13.7" r="1.2" fill="#1A1A9A"/><circle cx="14.1" cy="18.3" r="1.3" fill="#1A1A9A"/><circle cx="27.9" cy="25.6" r="1.4" fill="#1A1A9A"/><circle cx="21.7" cy="18.8" r="1.2" fill="#1A1A9A"/><circle cx="18.3" cy="12.4" r="1.1" fill="#1A1A9A"/><circle cx="26.4" cy="17.3" r="1.0" fill="#1A1A9A"/><circle cx="12.8" cy="15.3" r="0.9" fill="#1A1A9A"/></svg><div style="position:absolute;left:1117px;top:70px;width:8px;height:19px;background:repeating-conic-gradient(#fff 0 25%,#D4D0C8 0 50%) 0 0/2px 2px"></div><div style="position:absolute;left:1117px;top:63px;width:8px;height:8px;background:#D4D0C8;border-top:1px solid #fff;border-left:1px solid #fff;border-right:1px solid #404040;border-bottom:1px solid #404040"></div><svg style="position:absolute;left:1119px;top:65px;" width="4" height="3" viewBox="0 0 4 3"><path d="M0 3H4L2 0Z" fill="#555"/></svg><div style="position:absolute;left:1117px;top:89px;width:8px;height:8px;background:#D4D0C8;border-top:1px solid #fff;border-left:1px solid #fff;border-right:1px solid #404040;border-bottom:1px solid #404040"></div><svg style="position:absolute;left:1119px;top:91px;" width="4" height="3" viewBox="0 0 4 3"><path d="M0 0H4L2 3Z" fill="#555"/></svg><svg style="position:absolute;left:1133px;top:61px;" width="16" height="17" viewBox="0 0 16 17"><path d="M1 3H14" stroke="#000" stroke-width="2"/><path d="M5 2.5V1H10V2.5" stroke="#000" fill="none"/><path d="M2 5H13L12 16H3Z" fill="#fff" stroke="#000" stroke-width="1.5"/><path d="M5.5 7V14M7.5 7V14M9.5 7V14" stroke="#000"/></svg><svg style="position:absolute;left:2px;top:100px;" width="36" height="7" viewBox="0 0 36 7"><path d="M0.5 0.5V6.5L4 3.5Z" fill="#404040"/><rect x="7" y="1" width="1" height="1" fill="#404040"/><rect x="8" y="4" width="1" height="1" fill="#404040"/><rect x="10" y="1" width="1" height="1" fill="#404040"/><rect x="11" y="4" width="1" height="1" fill="#404040"/><rect x="13" y="1" width="1" height="1" fill="#404040"/><rect x="14" y="4" width="1" height="1" fill="#404040"/><rect x="16" y="1" width="1" height="1" fill="#404040"/><rect x="17" y="4" width="1" height="1" fill="#404040"/><rect x="19" y="1" width="1" height="1" fill="#404040"/><rect x="20" y="4" width="1" height="1" fill="#404040"/><rect x="22" y="1" width="1" height="1" fill="#404040"/><rect x="23" y="4" width="1" height="1" fill="#404040"/><rect x="25" y="1" width="1" height="1" fill="#404040"/><rect x="26" y="4" width="1" height="1" fill="#404040"/><rect x="28" y="1" width="1" height="1" fill="#404040"/><rect x="29" y="4" width="1" height="1" fill="#404040"/><rect x="31" y="1" width="1" height="1" fill="#404040"/><rect x="32" y="4" width="1" height="1" fill="#404040"/><rect x="34" y="1" width="1" height="1" fill="#404040"/><rect x="35" y="4" width="1" height="1" fill="#404040"/></svg><div style="position:absolute;left:0;top:109px;width:2px;height:488px;background:#808080"></div><div style="position:absolute;left:2px;top:109px;width:35px;height:1px;background:#808080"></div><div style="position:absolute;left:2px;top:110px;width:34px;height:240px;background:#C8C8C8"></div><div style="position:absolute;left:36px;top:109px;width:2px;height:488px;background:#fff"></div><div style="position:absolute;left:2px;top:350px;width:34px;height:2px;background:#fff"></div><div style="position:absolute;left:2px;top:594px;width:36px;height:2px;background:#fff"></div><svg style="position:absolute;left:8px;top:113px;" width="22" height="28" viewBox="0 0 22 28"><path d="M6 3L20 16L14 17L19 25L15 27L10 19L6 23Z" fill="#A00A14" stroke="#fff" stroke-width="1.2"/></svg><svg style="position:absolute;left:3px;top:146px;" width="32" height="32" viewBox="0 0 32 32"><path d="M14 26C5 25 1 16 4 9C7 3 16 2 20 6C24 10 23 17 20 19" stroke="#C02030" stroke-width="1.6" fill="none" stroke-dasharray="3 2"/><path d="M20 17L29 26L25 27L28 31L25 31L22 28L20 30Z" fill="#A00A14" stroke="#fff" stroke-width="0.8"/></svg><div style="position:absolute;left:2px;top:179px;width:34px;height:34px;border:3px solid #0A0A60;background:#C8C8D0"></div><svg style="position:absolute;left:5px;top:182px;" width="28" height="28" viewBox="0 0 28 28"><defs><linearGradient id="cone2" x1="0" y1="0" x2="1" y2="0"><stop offset="0" stop-color="#1A60D0"/><stop offset="0.45" stop-color="#50B0F8"/><stop offset="1" stop-color="#0A3A90"/></linearGradient></defs><path d="M3 6L12 3V16L3 18Z" fill="#B0B0B8" opacity="0.8"/><path d="M18 2L26 18C26 22 12 22 12 18Z" fill="url(#cone2)"/><path d="M3 18C10 20 14 21 18 24L16 19L24 26L14 27L17 25C12 22 7 21 3 20Z" fill="#E01818"/></svg><svg style="position:absolute;left:3px;top:214px;" width="32" height="33" viewBox="0 0 32 33"><defs><radialGradient id="rs" cx="0.4" cy="0.35" r="0.7"><stop offset="0" stop-color="#70D0FF"/><stop offset="0.5" stop-color="#1A80E8"/><stop offset="1" stop-color="#0A40B0"/></radialGradient></defs><circle cx="16" cy="12" r="9" fill="url(#rs)"/><path d="M5 16C3 19 5 22 8 22" stroke="#E01818" stroke-width="3" fill="none" opacity="0.55"/><path d="M25 13C31 19 29 29 19 30" stroke="#E01818" stroke-width="4.5" fill="none"/><path d="M21 25L12 30L21 33Z" fill="#E01818"/></svg><svg style="position:absolute;left:4px;top:248px;" width="30" height="32" viewBox="0 0 30 32"><path d="M3 6L10 3V22L3 24Z" fill="#B0B0B8" opacity="0.7"/><path d="M8 6L20 3L24 8V21L12 25L8 20Z" fill="#1A6AE0" stroke="#0A3A9A" stroke-width="0.8"/><path d="M22 10L28 16L24 17" stroke="#E01818" stroke-width="3" fill="none"/><path d="M6 26L20 22L18 28L24 24" stroke="#E01818" stroke-width="3" fill="none"/></svg><svg style="position:absolute;left:3px;top:282px;" width="33" height="33" viewBox="0 0 33 33"><path d="M2 31L32 1" stroke="#111" stroke-width="1.5"/><path d="M32 1V31H2Z" fill="#A8A8A8"/><circle cx="12" cy="10" r="4" fill="#1A80E0"/><path d="M24 14V26M24 26H14" stroke="#1A5AE0" stroke-width="2"/><path d="M21 14L24 8L27 14Z" fill="#20C040"/><path d="M18 23L12 26L18 29Z" fill="#1A30E0"/><circle cx="27" cy="27" r="3.5" fill="#E01818"/></svg><svg style="position:absolute;left:4px;top:318px;" width="30" height="30" viewBox="0 0 30 30"><path d="M4 25C4 12 8 5 11 7C14 9 13 18 17 22C20 25 23 20 24 6" stroke="#202070" stroke-width="2" fill="none"/><path d="M0 25H8M4 21V29M7 7H15M11 3V11M10 16H18M14 12V20M18 22H26M22 18V26M20 5H28M24 1V9" stroke="#B01818" stroke-width="1.6"/></svg><div style="position:absolute;left:3px;top:358px;width:33px;height:32px;border:1px solid #000;box-shadow:inset -1px -1px 0 #fff, 1px 1px 0 #000;background:#C0C0C0"></div><svg style="position:absolute;left:5px;top:360px;" width="29" height="28" viewBox="0 0 29 28"><path d="M4.200000000000001 12L15 6.0L25.799999999999997 12L15 18.0Z" fill="none" stroke="#111" stroke-width="1.2"/><path d="M9.600000000000001 9.0L20.4 15.0M20.4 9.0L9.600000000000001 15.0" stroke="#888" stroke-width="0.6"/><path d="M7 22V17" stroke="#10C030" stroke-width="2"/><path d="M7 22L3 26" stroke="#1A6AE0" stroke-width="2"/><path d="M7 22L11 26" stroke="#E01818" stroke-width="2"/></svg><div style="position:absolute;left:3px;top:392px;width:33px;height:32px;border:1px solid #000;box-shadow:inset -1px -1px 0 #fff, 1px 1px 0 #000;background:#C0C0C0"></div><svg style="position:absolute;left:5px;top:394px;" width="29" height="28" viewBox="0 0 29 28"><path d="M14.5 0V28M0 14H29" stroke="#000" stroke-width="1.5"/><path d="M7 3V11M3 7H11M7 17V25M3 21H11M22 17V25M18 21H26" stroke="#000" stroke-width="1.5"/><path d="M16.6 7L22 4.0L27.4 7L22 10.0Z" fill="none" stroke="#111" stroke-width="1.2"/><path d="M19.3 5.5L24.7 8.5M24.7 5.5L19.3 8.5" stroke="#888" stroke-width="0.6"/><path d="M17 12L21 10" stroke="#E01818" stroke-width="1.2"/></svg><div style="position:absolute;left:3px;top:426px;width:33px;height:32px;border:1px solid #000;box-shadow:inset -1px -1px 0 #fff, 1px 1px 0 #000;background:#C0C0C0"></div><svg style="position:absolute;left:5px;top:428px;" width="29" height="28" viewBox="0 0 29 28"><rect x="0" y="0" width="13" height="28" fill="#fff"/><path d="M14 0V28" stroke="#000" stroke-width="1.5"/><path d="M2 3H10M3 6H6M7 6H10M3 9H6M7 9H11M3 12H5M7 12H9M3 15H5M6 15H10M3 18H5M6 18H10M3 21H5M6 21H9" stroke="#444" stroke-width="0.8"/><path d="M16.6 12L22 9.0L27.4 12L22 15.0Z" fill="none" stroke="#111" stroke-width="1.2"/><path d="M19.3 10.5L24.7 13.5M24.7 10.5L19.3 13.5" stroke="#888" stroke-width="0.6"/><path d="M18 24V19" stroke="#10C030" stroke-width="2"/><path d="M18 24L14 28" stroke="#1A6AE0" stroke-width="2"/><path d="M18 24L22 28" stroke="#E01818" stroke-width="2"/></svg><div style="position:absolute;left:3px;top:460px;width:33px;height:32px;border:1px solid #000;box-shadow:inset -1px -1px 0 #fff, 1px 1px 0 #000;background:#C0C0C0"></div><svg style="position:absolute;left:5px;top:462px;" width="29" height="28" viewBox="0 0 29 28"><path d="M6.0 7L15 2.0L24.0 7L15 12.0Z" fill="none" stroke="#111" stroke-width="1.2"/><path d="M10.5 4.5L19.5 9.5M19.5 4.5L10.5 9.5" stroke="#888" stroke-width="0.6"/><path d="M0 14H29" stroke="#000" stroke-width="1.5"/><path d="M3 10L7 11" stroke="#E01818" stroke-width="1.2"/><rect x="1" y="16" width="5" height="11" fill="#fff"/><path d="M2 18H5M2 21H5M2 24H5" stroke="#C0C000" stroke-width="1.2"/><path d="M9 15V28" stroke="#E01818" stroke-width="1.3"/><path d="M6 22H28" stroke="#000" stroke-width="0.8"/><path d="M6 24C10 24 11 16 15 17C19 18 19 27 23 26C26 25 27 22 29 21" stroke="#2040E0" stroke-width="1" fill="none"/></svg><div style="position:absolute;left:3px;top:493px;width:33px;height:32px;border:1px solid #000;box-shadow:inset -1px -1px 0 #fff, 1px 1px 0 #000;background:#C0C0C0"></div><svg style="position:absolute;left:5px;top:495px;" width="29" height="28" viewBox="0 0 29 28"><rect x="0" y="0" width="29" height="13" fill="#000"/><rect x="3" y="1.5" width="5" height="4" fill="none" stroke="#5090D0"/><rect x="3" y="7.5" width="5" height="4" fill="none" stroke="#5090D0"/><rect x="12" y="1.5" width="5" height="4" fill="none" stroke="#E06080"/><rect x="12" y="7.5" width="5" height="4" fill="none" stroke="#E06080"/><rect x="21" y="4.5" width="5" height="4" fill="none" stroke="#60E060"/><path d="M8 3.5H12M8 9.5H12M17 3.5L21 6M17 9.5L21 7" stroke="#888" stroke-width="0.8"/><path d="M0 14H29" stroke="#000" stroke-width="1.5"/><path d="M6.9 21L15 16.5L23.1 21L15 25.5Z" fill="none" stroke="#111" stroke-width="1.2"/><path d="M10.95 18.75L19.05 23.25M19.05 18.75L10.95 23.25" stroke="#888" stroke-width="0.6"/></svg><div style="position:absolute;left:3px;top:528px;width:33px;height:32px;border:1px solid #000;box-shadow:inset -1px -1px 0 #fff, 1px 1px 0 #000;background:#C0C0C0"></div><svg style="position:absolute;left:5px;top:530px;" width="29" height="28" viewBox="0 0 29 28"><path d="M2.05 5L7 2.25L11.95 5L7 7.75Z" fill="none" stroke="#111" stroke-width="1.2"/><path d="M4.525 3.625L9.475 6.375M9.475 3.625L4.525 6.375" stroke="#888" stroke-width="0.6"/><path d="M2 10L6 13" stroke="#E01818" stroke-width="1"/><rect x="14" y="0" width="15" height="13" fill="#000"/><path d="M16 3H21M18 6H23M20 9H26" stroke="#E0E060" stroke-width="1.8"/><path d="M0 14H29M14 0V14" stroke="#000" stroke-width="1.5"/><rect x="1" y="16" width="5" height="11" fill="#fff"/><path d="M2 18H5M2 21H5M2 24H5" stroke="#C0C000" stroke-width="1.2"/><path d="M9 15V28" stroke="#E01818" stroke-width="1.3"/><path d="M6 22H28" stroke="#000" stroke-width="0.8"/><path d="M6 24C10 24 11 16 15 17C19 18 19 27 23 26C26 25 27 22 29 21" stroke="#2040E0" stroke-width="1" fill="none"/></svg><div style="position:absolute;left:3px;top:561px;width:16px;height:15px;background:#D4D0C8;border-top:1px solid #fff;border-left:1px solid #fff;border-right:1px solid #404040;border-bottom:1px solid #404040"></div><svg style="position:absolute;left:8px;top:567px;" width="7" height="4" viewBox="0 0 7 4"><path d="M0 0H6L3 3.5Z" fill="#000"/></svg><div style="position:absolute;left:19px;top:561px;width:16px;height:15px;background:#D4D0C8;border-top:1px solid #fff;border-left:1px solid #fff;border-right:1px solid #404040;border-bottom:1px solid #404040"></div><svg style="position:absolute;left:24px;top:567px;" width="7" height="4" viewBox="0 0 7 4"><path d="M0 0H6L3 3.5Z" fill="#000"/></svg><div style="position:absolute;left:3px;top:577px;width:16px;height:15px;background:#D4D0C8;border-top:1px solid #fff;border-left:1px solid #fff;border-right:1px solid #404040;border-bottom:1px solid #404040"></div><svg style="position:absolute;left:8px;top:583px;" width="7" height="4" viewBox="0 0 7 4"><path d="M0 0H6L3 3.5Z" fill="#000"/></svg><div style="position:absolute;left:19px;top:577px;width:16px;height:15px;background:#D4D0C8;border-top:1px solid #fff;border-left:1px solid #fff;border-right:1px solid #404040;border-bottom:1px solid #404040"></div><svg style="position:absolute;left:24px;top:583px;" width="7" height="4" viewBox="0 0 7 4"><path d="M0 0H6L3 3.5Z" fill="#000"/></svg><div style="position:absolute;left:39px;top:101px;width:469px;height:345px;background:#D4D0C8;border-top:1px solid #000;border-left:1px solid #000;border-right:1px solid #fff;border-bottom:1px solid #fff"></div><div class="t" style="left:48px;top:106px;">View</div><div class="t" style="left:78px;top:106px;">Shading</div><div class="t" style="left:127px;top:106px;">Lighting</div><div class="t" style="left:174px;top:106px;">Show</div><div class="t" style="left:210px;top:106px;">Panels</div><div style="position:absolute;left:43px;top:120px;width:460px;height:1px;background:#404040"></div><svg style="position:absolute;left:43px;top:121px" width="460" height="319" viewBox="0 0 460 319" shape-rendering="crispEdges"><rect width="460" height="319" fill="#A1A1A1"/><path d="M11.5 0V319M24.5 0V319M38.5 0V319M51.5 0V319M64.5 0V319M77.5 0V319M90.5 0V319M103.5 0V319M116.5 0V319M130.5 0V319M143.5 0V319M156.5 0V319M169.5 0V319M182.5 0V319M195.5 0V319M222.5 0V319M235.5 0V319M248.5 0V319M261.5 0V319M274.5 0V319M287.5 0V319M301.5 0V319M314.5 0V319M327.5 0V319M340.5 0V319M353.5 0V319M366.5 0V319M379.5 0V319M393.5 0V319M406.5 0V319M419.5 0V319M432.5 0V319M445.5 0V319M458.5 0V319M0 5.5H460M0 18.5H460M0 31.5H460M0 44.5H460M0 57.5H460M0 71.5H460M0 84.5H460M0 97.5H460M0 110.5H460M0 123.5H460M0 136.5H460M0 150.5H460M0 163.5H460M0 176.5H460M0 202.5H460M0 215.5H460M0 228.5H460M0 242.5H460M0 255.5H460M0 268.5H460M0 281.5H460M0 294.5H460M0 307.5H460" stroke="#767676" stroke-width="1" fill="none"/><rect x="208" y="0" width="2" height="319" fill="#000"/><rect x="0" y="188" width="460" height="2" fill="#000"/></svg><svg style="position:absolute;left:43px;top:121px" width="460" height="319" viewBox="43 121 460 319"><text x="55" y="309" fill="#8D8D8D" font-family="Liberation Sans" font-size="12" font-weight="bold">−15</text><text x="122" y="309" fill="#8D8D8D" font-family="Liberation Sans" font-size="12" font-weight="bold">−10</text><text x="193" y="309" fill="#8D8D8D" font-family="Liberation Sans" font-size="12" font-weight="bold">−5</text><text x="255" y="309" fill="#8D8D8D" font-family="Liberation Sans" font-size="12" font-weight="bold">0</text><text x="318" y="309" fill="#8D8D8D" font-family="Liberation Sans" font-size="12" font-weight="bold">5</text><text x="384" y="309" fill="#8D8D8D" font-family="Liberation Sans" font-size="12" font-weight="bold">10</text><text x="450" y="309" fill="#8D8D8D" font-family="Liberation Sans" font-size="12" font-weight="bold">15</text><text x="255" y="178" fill="#8D8D8D" font-family="Liberation Sans" font-size="12" font-weight="bold">−10</text><text x="257" y="244" fill="#8D8D8D" font-family="Liberation Sans" font-size="12" font-weight="bold">−5</text><text x="255" y="375" fill="#8D8D8D" font-family="Liberation Sans" font-size="12" font-weight="bold">5</text><text x="255" y="436" fill="#8D8D8D" font-family="Liberation Sans" font-size="12" font-weight="bold">10</text><g fill="none" stroke="#0A0E62"><path d="M76 245L130 257.5" stroke-width="1"/><path d="M175 244.5C150 248 128 254 122 264C118 272 124 279 140 282C165 285 200 280 225 272C238 267 246 261 252 259.5" stroke-width="2.6"/><path d="M160 247C140 251 127 257 124 266C122 273 128 278 145 280C170 282 195 278 215 273" stroke-width="1.2"/><path d="M127 257.5C160 266 200 276 225 280C238 282 246 283 252 283" stroke-width="2.4"/><path d="M126 274C145 279 175 280 205 276M128 277C150 282 180 282 210 278" stroke-width="1"/><path d="M170 245Q186 254 194 269M203 245Q218 254 226 266M230 245Q240 252 244 262M140 247Q160 258 168 270" stroke-width="1"/><path d="M252 264C238 265 222 269 205 274M252 268C240 269 226 272 212 276M252 272C242 273 232 275 220 278M252 277C242 277 232 279 225 280" stroke-width="1"/><path d="M252 260L230 281M252 260L212 277M252 260L240 283M252 260L198 275" stroke-width="0.9"/><g transform="translate(504 0) scale(-1 1)"><path d="M76 245L130 257.5" stroke-width="1"/><path d="M175 244.5C150 248 128 254 122 264C118 272 124 279 140 282C165 285 200 280 225 272C238 267 246 261 252 259.5" stroke-width="2.6"/><path d="M160 247C140 251 127 257 124 266C122 273 128 278 145 280C170 282 195 278 215 273" stroke-width="1.2"/><path d="M127 257.5C160 266 200 276 225 280C238 282 246 283 252 283" stroke-width="2.4"/><path d="M126 274C145 279 175 280 205 276M128 277C150 282 180 282 210 278" stroke-width="1"/><path d="M170 245Q186 254 194 269M203 245Q218 254 226 266M230 245Q240 252 244 262M140 247Q160 258 168 270" stroke-width="1"/><path d="M252 264C238 265 222 269 205 274M252 268C240 269 226 272 212 276M252 272C242 273 232 275 220 278M252 277C242 277 232 279 225 280" stroke-width="1"/><path d="M252 260L230 281M252 260L212 277M252 260L240 283M252 260L198 275" stroke-width="0.9"/></g><path d="M161.0 248.5H343.0" stroke-width="1"/><path d="M147.0 252.5H357.0" stroke-width="1"/><path d="M133.0 256.5H371.0" stroke-width="1"/><path d="M134.6 259.5H369.4" stroke-width="1"/><path d="M152.2 263.5H351.8" stroke-width="1"/><path d="M165.4 266.5H338.6" stroke-width="1"/><path d="M183.0 270.5H321.0" stroke-width="1"/><path d="M196.2 273.5H307.8" stroke-width="1"/><path d="M213.8 277.5H290.2" stroke-width="1"/><path d="M229.9 262.5H274.1" stroke-width="1.3" stroke-dasharray="4 1.5"/><path d="M217.2 264.7H286.8" stroke-width="1.3" stroke-dasharray="4 1.5"/><path d="M208.1 266.9H295.9" stroke-width="1.3" stroke-dasharray="4 1.5"/><path d="M200.6 269.09999999999997H303.4" stroke-width="1.3" stroke-dasharray="4 1.5"/><path d="M194.0 271.29999999999995H310.0" stroke-width="1.3" stroke-dasharray="4 1.5"/><path d="M188.1 273.49999999999994H315.9" stroke-width="1.3" stroke-dasharray="4 1.5"/><path d="M182.7 275.69999999999993H321.3" stroke-width="1.3" stroke-dasharray="4 1.5"/><path d="M191.5 277.8999999999999H312.5" stroke-width="1.3" stroke-dasharray="4 1.5"/><path d="M204.9 280.0999999999999H299.1" stroke-width="1.3" stroke-dasharray="4 1.5"/><path d="M224.0 282.2999999999999H280.0" stroke-width="1.3" stroke-dasharray="4 1.5"/><path d="M43 244.5H430" stroke-width="2.4"/><path d="M430 244.5H493" stroke-width="1.2"/></g><text x="259" y="433" fill="#083A12" font-family="Liberation Mono" font-size="11.5" font-weight="bold" letter-spacing="0.3">top</text><path d="M66 414.5H81" stroke="#E01818" stroke-width="1.2"/><path d="M68.5 414V423" stroke="#1010D0" stroke-width="1.2"/><text x="64" y="414" fill="#1A9A4A" font-family="Liberation Serif" font-size="11.5" font-weight="bold">y</text><text x="80" y="415" fill="#E01818" font-family="Liberation Serif" font-size="11.5" font-weight="bold">x</text><text x="64" y="429.5" fill="#1010D0" font-family="Liberation Serif" font-size="11.5" font-weight="bold">z</text></svg><div style="position:absolute;left:512px;top:101px;width:457px;height:343px;background:#0A246A"></div><div style="position:absolute;left:516px;top:105px;width:449px;height:335px;background:#D4D0C8"></div><div class="t" style="left:521px;top:106px;">View</div><div class="t" style="left:551px;top:106px;">Shading</div><div class="t" style="left:600px;top:106px;">Lighting</div><div class="t" style="left:647px;top:106px;">Show</div><div class="t" style="left:683px;top:106px;">Panels</div><div style="position:absolute;left:516px;top:120px;width:449px;height:1px;background:#404040"></div><div style="position:absolute;left:516px;top:121px;width:449px;height:319px;background:#A1A1A1"></div><svg style="position:absolute;left:516px;top:121px" width="449" height="319" viewBox="516 121 449 319"><defs>
<linearGradient id="gUL" x1="0" y1="0" x2="1" y2="1"><stop offset="0" stop-color="#828282"/><stop offset="1" stop-color="#727272"/></linearGradient>
<linearGradient id="gR" x1="0" y1="0" x2="1" y2="0"><stop offset="0" stop-color="#747474"/><stop offset="1" stop-color="#6A6A6A"/></linearGradient>
<linearGradient id="gRc" x1="0" y1="0" x2="1" y2="0"><stop offset="0" stop-color="#7A7A7A"/><stop offset="1" stop-color="#828282"/></linearGradient>
<linearGradient id="gL" x1="0" y1="0" x2="1" y2="0"><stop offset="0" stop-color="#7C7C7C"/><stop offset="1" stop-color="#727272"/></linearGradient>
<linearGradient id="gB" x1="0" y1="0" x2="0" y2="1"><stop offset="0" stop-color="#747474"/><stop offset="1" stop-color="#7C7C7C"/></linearGradient>
<radialGradient id="fan" cx="0.5" cy="0.5" r="0.5"><stop offset="0" stop-color="#303030" stop-opacity="0.9"/><stop offset="1" stop-color="#555" stop-opacity="0"/></radialGradient>
</defs><path d="M736 130L736 282L655 282L655 228Q656 216 665 207C705 180 730 148 736 130Z" fill="url(#gUL)"/><path d="M736 194L780 193.5Q788 189 795 191Q805 196 820 210C840 228 860 248 880 266L898 279L733 281Z" fill="url(#gR)"/><path d="M736 194L782 193.5C772 200 760 220 752 240C746 255 740 268 735 280Z" fill="url(#gRc)"/><path d="M607 284L733 281L734 366L690 365Q678 364 672 355C665 345 655 325 641 310Z" fill="url(#gL)"/><path d="M734 283L734 366L690 365C705 345 718 315 734 283Z" fill="#7E7E7E"/><path d="M736 281L817 280L817 352L737 428Z" fill="url(#gB)"/><path d="M736 281L817 280L817 345C810 325 795 310 779 303C765 296 750 288 736 281Z" fill="#6C6C6C"/><path d="M733.5 282V365" stroke="#8A8A8A" stroke-width="2"/><defs><linearGradient id="stk" gradientUnits="userSpaceOnUse" x1="0" y1="0" x2="28" y2="0"><stop offset="0" stop-color="#2A2A2A" stop-opacity="0.8"/><stop offset="1" stop-color="#2A2A2A" stop-opacity="0"/></linearGradient></defs><g transform="translate(733.5 281.5)"><path d="M0 0L28 -3L28 3Z" fill="url(#stk)" transform="rotate(-78) scale(1.0 1)"/><path d="M0 0L28 -2L28 2Z" fill="url(#stk)" transform="rotate(-60) scale(0.8 1)"/><path d="M0 0L28 -2.5L28 2.5Z" fill="url(#stk)" transform="rotate(12) scale(1.0 1)"/><path d="M0 0L28 -2L28 2Z" fill="url(#stk)" transform="rotate(35) scale(0.8 1)"/><path d="M0 0L28 -3L28 3Z" fill="url(#stk)" transform="rotate(98) scale(1.1 1)"/><path d="M0 0L28 -2L28 2Z" fill="url(#stk)" transform="rotate(122) scale(0.8 1)"/><path d="M0 0L28 -2.5L28 2.5Z" fill="url(#stk)" transform="rotate(205) scale(0.9 1)"/><path d="M0 0L28 -2L28 2Z" fill="url(#stk)" transform="rotate(160) scale(0.7 1)"/><path d="M0 0L28 -2L28 2Z" fill="url(#stk)" transform="rotate(-15) scale(0.7 1)"/></g><path d="M736 130C730 148 705 180 665 207Q656 216 656 228C665 245 700 262 733 281" stroke="#0A0E62" stroke-width="1.1" fill="none"/><path d="M659 282H733" stroke="#0A0E62" stroke-width="1.6" fill="none"/><path d="M736 130V194" stroke="#0A0E62" stroke-width="1.2" fill="none"/><path d="M720.5 212V242" stroke="#20A060" stroke-width="1.3"/><path d="M720 242H750" stroke="#E03030" stroke-width="1.3"/><path d="M720 242L707 237" stroke="#2030C0" stroke-width="1.3"/><text x="716" y="211" fill="#20A060" font-family="Liberation Serif" font-size="11.5" font-weight="bold">y</text><text x="749" y="244" fill="#E01818" font-family="Liberation Serif" font-size="11.5" font-weight="bold">x</text><text x="702" y="240" fill="#1818D0" font-family="Liberation Serif" font-size="11.5" font-weight="bold">z</text><text x="718" y="433" fill="#083A12" font-family="Liberation Mono" font-size="11.5" font-weight="bold" letter-spacing="0.3">persp</text><path d="M541.5 400V415" stroke="#1A9A4A" stroke-width="1.2"/><path d="M541 415.5H555" stroke="#E01818" stroke-width="1.2"/><text x="537" y="401.5" fill="#1A9A4A" font-family="Liberation Serif" font-size="11.5" font-weight="bold">y</text><text x="532.5" y="415.5" fill="#1010D0" font-family="Liberation Serif" font-size="11.5" font-weight="bold">z</text><text x="553" y="415.5" fill="#E01818" font-family="Liberation Serif" font-size="11.5" font-weight="bold">x</text></svg><div style="position:absolute;left:39px;top:450px;width:469px;height:335px;background:#D4D0C8;border-top:1px solid #000;border-left:1px solid #000;border-right:1px solid #fff;border-bottom:1px solid #fff"></div><div class="t" style="left:48px;top:455px;">View</div><div class="t" style="left:78px;top:455px;">Shading</div><div class="t" style="left:127px;top:455px;">Lighting</div><div class="t" style="left:174px;top:455px;">Show</div><div class="t" style="left:210px;top:455px;">Panels</div><div style="position:absolute;left:43px;top:469px;width:460px;height:1px;background:#404040"></div><svg style="position:absolute;left:43px;top:470px" width="460" height="310" viewBox="0 0 460 310" shape-rendering="crispEdges"><rect width="460" height="310" fill="#A1A1A1"/><path d="M0.5 0V310M7.5 0V310M14.5 0V310M22.5 0V310M29.5 0V310M37.5 0V310M44.5 0V310M51.5 0V310M59.5 0V310M66.5 0V310M74.5 0V310M81.5 0V310M89.5 0V310M96.5 0V310M103.5 0V310M111.5 0V310M118.5 0V310M126.5 0V310M133.5 0V310M141.5 0V310M148.5 0V310M155.5 0V310M163.5 0V310M170.5 0V310M178.5 0V310M185.5 0V310M192.5 0V310M200.5 0V310M207.5 0V310M222.5 0V310M230.5 0V310M237.5 0V310M244.5 0V310M252.5 0V310M259.5 0V310M267.5 0V310M274.5 0V310M281.5 0V310M289.5 0V310M296.5 0V310M304.5 0V310M311.5 0V310M319.5 0V310M326.5 0V310M333.5 0V310M341.5 0V310M348.5 0V310M356.5 0V310M363.5 0V310M371.5 0V310M378.5 0V310M385.5 0V310M393.5 0V310M400.5 0V310M408.5 0V310M415.5 0V310M422.5 0V310M430.5 0V310M437.5 0V310M445.5 0V310M452.5 0V310M0 5.5H460M0 13.5H460M0 20.5H460M0 27.5H460M0 35.5H460M0 42.5H460M0 50.5H460M0 57.5H460M0 64.5H460M0 72.5H460M0 79.5H460M0 87.5H460M0 94.5H460M0 102.5H460M0 116.5H460M0 124.5H460M0 131.5H460M0 139.5H460M0 146.5H460M0 154.5H460M0 161.5H460M0 168.5H460M0 176.5H460M0 183.5H460M0 191.5H460M0 198.5H460M0 205.5H460M0 213.5H460M0 220.5H460M0 228.5H460M0 235.5H460M0 243.5H460M0 250.5H460M0 257.5H460M0 265.5H460M0 272.5H460M0 280.5H460M0 287.5H460M0 294.5H460M0 302.5H460M0 309.5H460" stroke="#767676" stroke-width="1" fill="none"/><rect x="214" y="0" width="2" height="310" fill="#000"/><rect x="0" y="109" width="460" height="2" fill="#000"/></svg><svg style="position:absolute;left:43px;top:470px" width="460" height="310" viewBox="43 470 460 310"><text x="45" y="578" fill="#8D8D8D" font-family="Liberation Sans" font-size="12" font-weight="bold">30</text><text x="72" y="578" fill="#8D8D8D" font-family="Liberation Sans" font-size="12" font-weight="bold">−25</text><text x="110" y="578" fill="#8D8D8D" font-family="Liberation Sans" font-size="12" font-weight="bold">−20</text><text x="147" y="578" fill="#8D8D8D" font-family="Liberation Sans" font-size="12" font-weight="bold">−15</text><text x="184" y="578" fill="#8D8D8D" font-family="Liberation Sans" font-size="12" font-weight="bold">−10</text><text x="222" y="578" fill="#8D8D8D" font-family="Liberation Sans" font-size="12" font-weight="bold">−5</text><text x="262" y="578" fill="#8D8D8D" font-family="Liberation Sans" font-size="12" font-weight="bold">0</text><text x="300" y="578" fill="#8D8D8D" font-family="Liberation Sans" font-size="12" font-weight="bold">5</text><text x="336" y="578" fill="#8D8D8D" font-family="Liberation Sans" font-size="12" font-weight="bold">10</text><text x="372" y="578" fill="#8D8D8D" font-family="Liberation Sans" font-size="12" font-weight="bold">15</text><text x="407" y="578" fill="#8D8D8D" font-family="Liberation Sans" font-size="12" font-weight="bold">20</text><text x="444" y="578" fill="#8D8D8D" font-family="Liberation Sans" font-size="12" font-weight="bold">25</text><text x="482" y="578" fill="#8D8D8D" font-family="Liberation Sans" font-size="12" font-weight="bold">30</text><text x="261" y="504" fill="#8D8D8D" font-family="Liberation Sans" font-size="12" font-weight="bold">10</text><text x="262" y="652" fill="#8D8D8D" font-family="Liberation Sans" font-size="12" font-weight="bold">−10</text><text x="262" y="689" fill="#8D8D8D" font-family="Liberation Sans" font-size="12" font-weight="bold">−15</text><text x="262" y="726" fill="#8D8D8D" font-family="Liberation Sans" font-size="12" font-weight="bold">−20</text><text x="262" y="763" fill="#8D8D8D" font-family="Liberation Sans" font-size="12" font-weight="bold">−25</text><g fill="none" stroke="#0A0E62" stroke-width="1"><path d="M257 475C240 496 222 515 206 529C195 540 187 546 185 553L185 609L258 609" stroke-width="1.6"/><path d="M191 551V609"/><path d="M195 547V609"/><path d="M207 529V609"/><path d="M222 515V609"/><path d="M239 496V609"/><path d="M258 520Q215 555 186 565"/><path d="M258 555Q220 578 186 580"/><path d="M258 500Q225 530 200 538"/><path d="M258 609L186 562M258 609L187 580M258 609L190 598M258 609L205 545M258 609L222 520"/><path d="M186 555V609" stroke-width="2.5"/><path d="M258 536H318C324 537 328 541 332 546L393 609H258" stroke-width="1.6"/><path d="M258 539.3H322"/><path d="M258 542.6H326"/><path d="M258 545.8H330"/><path d="M258 558.2H343"/><path d="M258 573.2H357"/><path d="M258 590.1H374"/><path d="M300 540L350 609M282 540L318 609M270 545L290 609M258 609L300 540M258 609L283 540"/><path d="M258 536V609" stroke-width="2.5"/><g transform="rotate(180 258 609)"><path d="M257 475C240 496 222 515 206 529C195 540 187 546 185 553L185 609L258 609" stroke-width="1.6"/><path d="M191 551V609"/><path d="M195 547V609"/><path d="M207 529V609"/><path d="M222 515V609"/><path d="M239 496V609"/><path d="M258 520Q215 555 186 565"/><path d="M258 555Q220 578 186 580"/><path d="M258 500Q225 530 200 538"/><path d="M258 609L186 562M258 609L187 580M258 609L190 598M258 609L205 545M258 609L222 520"/><path d="M186 555V609" stroke-width="2.5"/><path d="M258 536H318C324 537 328 541 332 546L393 609H258" stroke-width="1.6"/><path d="M258 539.3H322"/><path d="M258 542.6H326"/><path d="M258 545.8H330"/><path d="M258 558.2H343"/><path d="M258 573.2H357"/><path d="M258 590.1H374"/><path d="M300 540L350 609M282 540L318 609M270 545L290 609M258 609L300 540M258 609L283 540"/><path d="M258 536V609" stroke-width="2.5"/></g><path d="M258 470V782" stroke="#000" stroke-width="2"/><path d="M258 475V743" stroke-width="2.5"/></g><text x="251" y="772" fill="#083A12" font-family="Liberation Mono" font-size="11.5" font-weight="bold" letter-spacing="0.3">front</text><path d="M68.5 740V748" stroke="#1A9A4A" stroke-width="1.2"/><path d="M72 754.5H81" stroke="#E01818" stroke-width="1.2"/><text x="64" y="740.5" fill="#1A9A4A" font-family="Liberation Serif" font-size="11.5" font-weight="bold">y</text><text x="64.5" y="755.5" fill="#1010D0" font-family="Liberation Serif" font-size="11.5" font-weight="bold">z</text><text x="80" y="755.5" fill="#E01818" font-family="Liberation Serif" font-size="11.5" font-weight="bold">x</text></svg><div style="position:absolute;left:512px;top:450px;width:458px;height:335px;background:#D4D0C8;border-top:1px solid #000;border-left:1px solid #000;border-right:1px solid #fff;border-bottom:1px solid #fff"></div><div class="t" style="left:521px;top:455px;">View</div><div class="t" style="left:551px;top:455px;">Shading</div><div class="t" style="left:600px;top:455px;">Lighting</div><div class="t" style="left:647px;top:455px;">Show</div><div class="t" style="left:683px;top:455px;">Panels</div><div style="position:absolute;left:516px;top:469px;width:449px;height:1px;background:#404040"></div><svg style="position:absolute;left:516px;top:470px" width="449" height="310" viewBox="0 0 449 310" shape-rendering="crispEdges"><rect width="449" height="310" fill="#A1A1A1"/><path d="M11.5 0V310M27.5 0V310M43.5 0V310M59.5 0V310M75.5 0V310M92.5 0V310M108.5 0V310M124.5 0V310M140.5 0V310M156.5 0V310M172.5 0V310M204.5 0V310M220.5 0V310M236.5 0V310M253.5 0V310M269.5 0V310M285.5 0V310M301.5 0V310M317.5 0V310M333.5 0V310M349.5 0V310M365.5 0V310M381.5 0V310M397.5 0V310M414.5 0V310M430.5 0V310M446.5 0V310M0 12.5H449M0 28.5H449M0 44.5H449M0 60.5H449M0 76.5H449M0 92.5H449M0 108.5H449M0 125.5H449M0 141.5H449M0 157.5H449M0 173.5H449M0 189.5H449M0 205.5H449M0 221.5H449M0 253.5H449M0 270.5H449M0 286.5H449M0 302.5H449" stroke="#767676" stroke-width="1" fill="none"/><rect x="188" y="0" width="2" height="310" fill="#000"/><rect x="0" y="237" width="449" height="2" fill="#000"/></svg><svg style="position:absolute;left:516px;top:470px" width="449" height="310" viewBox="516 470 449 310"><text x="544" y="706" fill="#8D8D8D" font-family="Liberation Sans" font-size="12" font-weight="bold">10</text><text x="623" y="706" fill="#8D8D8D" font-family="Liberation Sans" font-size="12" font-weight="bold">5</text><text x="706" y="706" fill="#8D8D8D" font-family="Liberation Sans" font-size="12" font-weight="bold">0</text><text x="786" y="706" fill="#8D8D8D" font-family="Liberation Sans" font-size="12" font-weight="bold">−5</text><text x="864" y="706" fill="#8D8D8D" font-family="Liberation Sans" font-size="12" font-weight="bold">−10</text><text x="946" y="706" fill="#8D8D8D" font-family="Liberation Sans" font-size="12" font-weight="bold">−1</text><text x="706" y="549" fill="#8D8D8D" font-family="Liberation Sans" font-size="12" font-weight="bold">10</text><text x="706" y="628" fill="#8D8D8D" font-family="Liberation Sans" font-size="12" font-weight="bold">5</text><g fill="none" stroke="#0A0E62" stroke-width="1"><path d="M785.5 477V545" stroke-width="1.3"/><path d="M785.5 545V780" stroke-width="2.6"/><path d="M760.0 780C746.0 740 737.0 690 737.0 650.0C737.0 625.0 745.0 611.0 753.0 611.0"/><path d="M759.3 780C745.6 740 739.2 690 739.2 648.7C739.2 625.9 746.3 612.1 753.7 612.1"/><path d="M758.7 780C745.1 740 741.4 690 741.4 647.4C741.4 626.8 747.6 613.2 754.3 613.2"/><path d="M758.0 780C744.7 740 743.6 690 743.6 646.0C743.6 627.6 749.0 614.3 755.0 614.3"/><path d="M737.5 646C742 700 752 745 764 780" stroke-width="2.6"/><path d="M753 611C768 613 779 645 786 707" stroke-width="2.6"/><path d="M742.0 678V780" stroke-width="0.9"/><path d="M744.6 674V780" stroke-width="0.9"/><path d="M747.2 671V780" stroke-width="0.9"/><path d="M749.8 667V780" stroke-width="0.9"/><path d="M752.4 663V780" stroke-width="0.9"/><path d="M755.0 660V780" stroke-width="0.9"/><path d="M757.6 656V780" stroke-width="0.9"/><path d="M760.2 652V780" stroke-width="0.9"/><path d="M762.8 648V780" stroke-width="0.9"/><path d="M765.4 645V780" stroke-width="0.9"/><path d="M768.0 641V780" stroke-width="0.9"/><path d="M770.6 637V780" stroke-width="0.9"/><path d="M773.2 634V780" stroke-width="0.9"/><path d="M775.8 630V780" stroke-width="0.9"/><path d="M778.4 626V780" stroke-width="0.9"/><path d="M781.0 623V780" stroke-width="0.9"/><path d="M783.6 619V780" stroke-width="0.9"/><path d="M741 680L785 617" stroke-width="1.2"/><path d="M785.5 546C775 575 762 605 756 627C750 645 745 660 742 680" stroke-width="1.2"/><path d="M785 678Q760 690 743 710M785 703Q760 720 747 737M785 725Q765 740 750 757M785 744Q768 755 759 771" stroke-width="1.2"/><path d="M748 772H785M750 776H785M752 779H785" stroke-width="1"/></g><text x="721" y="774" fill="#083A12" font-family="Liberation Mono" font-size="11.5" font-weight="bold" letter-spacing="0.3">side</text><path d="M541.5 741V748" stroke="#1A9A4A" stroke-width="1.2"/><path d="M529 755.5H540" stroke="#1010D0" stroke-width="1.2"/><text x="537.5" y="741.5" fill="#1A9A4A" font-family="Liberation Serif" font-size="11.5" font-weight="bold">y</text><text x="521" y="755.5" fill="#1010D0" font-family="Liberation Serif" font-size="11.5" font-weight="bold">z</text><text x="539.5" y="755.5" fill="#E01818" font-family="Liberation Serif" font-size="11.5" font-weight="bold">x</text></svg><div style="position:absolute;left:969px;top:99px;width:1px;height:690px;background:#fff"></div><svg style="position:absolute;left:974px;top:102px;" width="178" height="7" viewBox="0 0 178 7"><path d="M0.5 0.5V6.5L4 3.5Z" fill="#404040"/><rect x="7" y="1" width="1" height="1" fill="#404040"/><rect x="8" y="4" width="1" height="1" fill="#404040"/><rect x="10" y="1" width="1" height="1" fill="#404040"/><rect x="11" y="4" width="1" height="1" fill="#404040"/><rect x="13" y="1" width="1" height="1" fill="#404040"/><rect x="14" y="4" width="1" height="1" fill="#404040"/><rect x="16" y="1" width="1" height="1" fill="#404040"/><rect x="17" y="4" width="1" height="1" fill="#404040"/><rect x="19" y="1" width="1" height="1" fill="#404040"/><rect x="20" y="4" width="1" height="1" fill="#404040"/><rect x="22" y="1" width="1" height="1" fill="#404040"/><rect x="23" y="4" width="1" height="1" fill="#404040"/><rect x="25" y="1" width="1" height="1" fill="#404040"/><rect x="26" y="4" width="1" height="1" fill="#404040"/><rect x="28" y="1" width="1" height="1" fill="#404040"/><rect x="29" y="4" width="1" height="1" fill="#404040"/><rect x="31" y="1" width="1" height="1" fill="#404040"/><rect x="32" y="4" width="1" height="1" fill="#404040"/><rect x="34" y="1" width="1" height="1" fill="#404040"/><rect x="35" y="4" width="1" height="1" fill="#404040"/><rect x="37" y="1" width="1" height="1" fill="#404040"/><rect x="38" y="4" width="1" height="1" fill="#404040"/><rect x="40" y="1" width="1" height="1" fill="#404040"/><rect x="41" y="4" width="1" height="1" fill="#404040"/><rect x="43" y="1" width="1" height="1" fill="#404040"/><rect x="44" y="4" width="1" height="1" fill="#404040"/><rect x="46" y="1" width="1" height="1" fill="#404040"/><rect x="47" y="4" width="1" height="1" fill="#404040"/><rect x="49" y="1" width="1" height="1" fill="#404040"/><rect x="50" y="4" width="1" height="1" fill="#404040"/><rect x="52" y="1" width="1" height="1" fill="#404040"/><rect x="53" y="4" width="1" height="1" fill="#404040"/><rect x="55" y="1" width="1" height="1" fill="#404040"/><rect x="56" y="4" width="1" height="1" fill="#404040"/><rect x="58" y="1" width="1" height="1" fill="#404040"/><rect x="59" y="4" width="1" height="1" fill="#404040"/><rect x="61" y="1" width="1" height="1" fill="#404040"/><rect x="62" y="4" width="1" height="1" fill="#404040"/><rect x="64" y="1" width="1" height="1" fill="#404040"/><rect x="65" y="4" width="1" height="1" fill="#404040"/><rect x="67" y="1" width="1" height="1" fill="#404040"/><rect x="68" y="4" width="1" height="1" fill="#404040"/><rect x="70" y="1" width="1" height="1" fill="#404040"/><rect x="71" y="4" width="1" height="1" fill="#404040"/><rect x="73" y="1" width="1" height="1" fill="#404040"/><rect x="74" y="4" width="1" height="1" fill="#404040"/><rect x="76" y="1" width="1" height="1" fill="#404040"/><rect x="77" y="4" width="1" height="1" fill="#404040"/><rect x="79" y="1" width="1" height="1" fill="#404040"/><rect x="80" y="4" width="1" height="1" fill="#404040"/><rect x="82" y="1" width="1" height="1" fill="#404040"/><rect x="83" y="4" width="1" height="1" fill="#404040"/><rect x="85" y="1" width="1" height="1" fill="#404040"/><rect x="86" y="4" width="1" height="1" fill="#404040"/><rect x="88" y="1" width="1" height="1" fill="#404040"/><rect x="89" y="4" width="1" height="1" fill="#404040"/><rect x="91" y="1" width="1" height="1" fill="#404040"/><rect x="92" y="4" width="1" height="1" fill="#404040"/><rect x="94" y="1" width="1" height="1" fill="#404040"/><rect x="95" y="4" width="1" height="1" fill="#404040"/><rect x="97" y="1" width="1" height="1" fill="#404040"/><rect x="98" y="4" width="1" height="1" fill="#404040"/><rect x="100" y="1" width="1" height="1" fill="#404040"/><rect x="101" y="4" width="1" height="1" fill="#404040"/><rect x="103" y="1" width="1" height="1" fill="#404040"/><rect x="104" y="4" width="1" height="1" fill="#404040"/><rect x="106" y="1" width="1" height="1" fill="#404040"/><rect x="107" y="4" width="1" height="1" fill="#404040"/><rect x="109" y="1" width="1" height="1" fill="#404040"/><rect x="110" y="4" width="1" height="1" fill="#404040"/><rect x="112" y="1" width="1" height="1" fill="#404040"/><rect x="113" y="4" width="1" height="1" fill="#404040"/><rect x="115" y="1" width="1" height="1" fill="#404040"/><rect x="116" y="4" width="1" height="1" fill="#404040"/><rect x="118" y="1" width="1" height="1" fill="#404040"/><rect x="119" y="4" width="1" height="1" fill="#404040"/><rect x="121" y="1" width="1" height="1" fill="#404040"/><rect x="122" y="4" width="1" height="1" fill="#404040"/><rect x="124" y="1" width="1" height="1" fill="#404040"/><rect x="125" y="4" width="1" height="1" fill="#404040"/><rect x="127" y="1" width="1" height="1" fill="#404040"/><rect x="128" y="4" width="1" height="1" fill="#404040"/><rect x="130" y="1" width="1" height="1" fill="#404040"/><rect x="131" y="4" width="1" height="1" fill="#404040"/><rect x="133" y="1" width="1" height="1" fill="#404040"/><rect x="134" y="4" width="1" height="1" fill="#404040"/><rect x="136" y="1" width="1" height="1" fill="#404040"/><rect x="137" y="4" width="1" height="1" fill="#404040"/><rect x="139" y="1" width="1" height="1" fill="#404040"/><rect x="140" y="4" width="1" height="1" fill="#404040"/><rect x="142" y="1" width="1" height="1" fill="#404040"/><rect x="143" y="4" width="1" height="1" fill="#404040"/><rect x="145" y="1" width="1" height="1" fill="#404040"/><rect x="146" y="4" width="1" height="1" fill="#404040"/><rect x="148" y="1" width="1" height="1" fill="#404040"/><rect x="149" y="4" width="1" height="1" fill="#404040"/><rect x="151" y="1" width="1" height="1" fill="#404040"/><rect x="152" y="4" width="1" height="1" fill="#404040"/><rect x="154" y="1" width="1" height="1" fill="#404040"/><rect x="155" y="4" width="1" height="1" fill="#404040"/><rect x="157" y="1" width="1" height="1" fill="#404040"/><rect x="158" y="4" width="1" height="1" fill="#404040"/><rect x="160" y="1" width="1" height="1" fill="#404040"/><rect x="161" y="4" width="1" height="1" fill="#404040"/><rect x="163" y="1" width="1" height="1" fill="#404040"/><rect x="164" y="4" width="1" height="1" fill="#404040"/><rect x="166" y="1" width="1" height="1" fill="#404040"/><rect x="167" y="4" width="1" height="1" fill="#404040"/><rect x="169" y="1" width="1" height="1" fill="#404040"/><rect x="170" y="4" width="1" height="1" fill="#404040"/><rect x="172" y="1" width="1" height="1" fill="#404040"/><rect x="173" y="4" width="1" height="1" fill="#404040"/><rect x="175" y="1" width="1" height="1" fill="#404040"/><rect x="176" y="4" width="1" height="1" fill="#404040"/></svg><svg style="position:absolute;left:976px;top:112px;" width="16" height="16" viewBox="0 0 16 16"><path d="M0 1H6M0 4H6M0 7H6M0 10H6M0 13H6M7 0V15M8 1H15M8 4H15M8 7H15M8 10H15M8 13H15" stroke="#000" stroke-width="1.3"/><rect x="8" y="2" width="7" height="1.6" fill="#fff"/><rect x="8" y="8" width="7" height="1.6" fill="#fff"/></svg><svg style="position:absolute;left:998px;top:112px;" width="16" height="16" viewBox="0 0 16 16"><rect x="0" y="2" width="2" height="2" fill="#000"/><rect x="4" y="0.5" width="3.5" height="3.5" fill="#40B0F0" stroke="#000" stroke-width="0.8"/><path d="M9 2.5H16" stroke="#000" stroke-width="1.4"/><rect x="0" y="7" width="2" height="2" fill="#000"/><rect x="4" y="5.5" width="3.5" height="3.5" fill="#C02050" stroke="#000" stroke-width="0.8"/><path d="M9 7.5H16" stroke="#000" stroke-width="1.4"/><rect x="0" y="12" width="2" height="2" fill="#000"/><rect x="4" y="10.5" width="3.5" height="3.5" fill="#F0E060" stroke="#000" stroke-width="0.8"/><path d="M9 12.5H16" stroke="#000" stroke-width="1.4"/></svg><div style="position:absolute;left:1019px;top:109px;width:22px;height:22px;background:#E0DDD6;border-top:1px solid #808080;border-left:1px solid #808080;border-right:1px solid #fff;border-bottom:1px solid #fff"></div><svg style="position:absolute;left:1022px;top:112px;" width="17" height="16" viewBox="0 0 17 16"><path d="M3 1H9M3 4H9M0 8H16M10 0V8M10 1H16M10 4H16" stroke="#000" stroke-width="1.3"/><rect x="2" y="10" width="4" height="4" fill="#30D0C0" stroke="#000" stroke-width="0.8"/><path d="M8 12H16" stroke="#000" stroke-width="1.4"/><rect x="0" y="11" width="1.5" height="1.5" fill="#000"/></svg><div style="position:absolute;left:1086px;top:109px;width:21px;height:23px;background:#D4D0C8;border-top:1px solid #fff;border-left:1px solid #fff;border-right:1px solid #404040;border-bottom:1px solid #404040;box-shadow:inset -1px -1px 0 #808080"></div><div style="position:absolute;left:1108px;top:109px;width:21px;height:23px;background:#D4D0C8;border-top:1px solid #fff;border-left:1px solid #fff;border-right:1px solid #404040;border-bottom:1px solid #404040;box-shadow:inset -1px -1px 0 #808080"></div><div style="position:absolute;left:1130px;top:109px;width:21px;height:23px;background:#D4D0C8;border-top:1px solid #fff;border-left:1px solid #fff;border-right:1px solid #404040;border-bottom:1px solid #404040;box-shadow:inset -1px -1px 0 #808080"></div><svg style="position:absolute;left:1089px;top:112px;" width="16" height="17" viewBox="0 0 16 17"><path d="M8 9V2" stroke="#10A020" stroke-width="2"/><path d="M5 4L8 0L11 4Z" fill="#20D030"/><path d="M8 9H3" stroke="#1020E0" stroke-width="2"/><path d="M4 6L0 9L4 12Z" fill="#1030F0"/><rect x="8" y="8" width="6" height="5" rx="2" fill="#E01818"/><rect x="7" y="8" width="3" height="3" fill="#fff" stroke="#000" stroke-width="0.6"/></svg><svg style="position:absolute;left:1111px;top:112px;" width="16" height="17" viewBox="0 0 16 17"><circle cx="8" cy="8.5" r="7" fill="#888" stroke="#666" stroke-width="1.5"/><path d="M8 1.5A7 7 0 0 1 15 8.5H8Z" fill="#C8C8C8"/></svg><svg style="position:absolute;left:1133px;top:112px;" width="16" height="17" viewBox="0 0 16 17"><path d="M2 15L12 5" stroke="#808080" stroke-width="2.5"/><path d="M7 3H14V10Z" fill="#808080"/></svg><div style="position:absolute;left:973px;top:134px;width:178px;height:446px;border-top:2px solid #000;border-left:1px solid #000;box-shadow:inset 1px 0 0 #fff;border-right:1px solid #fff;border-bottom:1px solid #fff"></div><div class="t" style="left:978px;top:136px;">Channels</div><div class="t" style="left:1033px;top:136px;">Object</div><div style="position:absolute;left:975px;top:150px;width:175px;height:1px;background:#404040"></div><div style="position:absolute;left:975px;top:152px;width:175px;height:427px;border:1px solid #A0A0A0;border-right-color:#fff;border-bottom-color:#fff"></div><div style="position:absolute;left:977px;top:154px;width:171px;height:1px;background:#A0A0A0"></div><div style="position:absolute;left:973px;top:586px;width:178px;height:181px;border-top:2px solid #000;border-left:1px solid #000;box-shadow:inset 1px 0 0 #fff;border-right:1px solid #fff"></div><div class="t" style="left:978px;top:588px;">Layers</div><div class="t" style="left:1021px;top:588px;">Options</div><div style="position:absolute;left:975px;top:601px;width:175px;height:1px;background:#404040"></div><div style="position:absolute;left:976px;top:604px;width:55px;height:24px;background:#fff;border-top:2px solid #404040;border-left:2px solid #404040;border-right:1px solid #D4D0C8;border-bottom:1px solid #fff"></div><div style="position:absolute;left:1022px;top:606px;width:8px;height:20px;background:#D4D0C8;border-top:1px solid #fff;border-left:1px solid #fff;border-right:1px solid #404040;border-bottom:1px solid #404040;box-shadow:inset -1px -1px 0 #808080"></div><svg style="position:absolute;left:1024px;top:615px;" width="5" height="3" viewBox="0 0 5 3"><path d="M0 0H5L2.5 3Z" fill="#000"/></svg><div class="t" style="left:981px;top:609px;font-size:11px">Display</div><div style="position:absolute;left:1124px;top:604px;width:25px;height:25px;background:#D4D0C8;border-top:1px solid #fff;border-left:1px solid #fff;border-right:1px solid #404040;border-bottom:1px solid #404040;box-shadow:inset -1px -1px 0 #808080"></div><svg style="position:absolute;left:1127px;top:607px;" width="19" height="18" viewBox="0 0 19 18"><path d="M1 12L9 9L17 12L9 16Z" fill="#909090" stroke="#000" stroke-width="1.2"/><path d="M1 8L9 5L17 8L9 12Z" fill="#fff" stroke="#000" stroke-width="1.2"/><path d="M3 4L9 2L16 4L10 6Z" fill="#fff" stroke="#000" stroke-width="1"/></svg><div style="position:absolute;left:975px;top:631px;width:175px;height:135px;border-top:2px solid #404040;border-left:2px solid #404040;border-bottom:1px solid #fff"></div><div style="position:absolute;left:1140px;top:633px;width:9px;height:132px;background:repeating-conic-gradient(#fff 0 25%,#D4D0C8 0 50%) 0 0/2px 2px"></div><div style="position:absolute;left:1140px;top:633px;width:9px;height:9px;background:#D4D0C8;border-top:1px solid #fff;border-left:1px solid #fff;border-right:1px solid #404040;border-bottom:1px solid #404040;box-shadow:inset -1px -1px 0 #808080"></div><div style="position:absolute;left:1140px;top:756px;width:9px;height:9px;background:#D4D0C8;border-top:1px solid #fff;border-left:1px solid #fff;border-right:1px solid #404040;border-bottom:1px solid #404040;box-shadow:inset -1px -1px 0 #808080"></div><div style="position:absolute;left:972px;top:769px;width:90px;height:16px;background:#D4D0C8;border-top:1px solid #fff;border-left:1px solid #fff;border-right:1px solid #404040;border-bottom:1px solid #404040;box-shadow:inset -1px -1px 0 #808080"></div><div style="position:absolute;left:1062px;top:769px;width:89px;height:16px;background:#D4D0C8;border-top:1px solid #fff;border-left:1px solid #fff;border-right:1px solid #404040;border-bottom:1px solid #404040;box-shadow:inset -1px -1px 0 #808080"></div><div class="t" style="left:1008px;top:771px;font-size:12px;letter-spacing:-1px">&lt;&lt;</div><div class="t" style="left:1098px;top:771px;font-size:12px;letter-spacing:-1px">&gt;&gt;</div><svg style="position:absolute;left:2px;top:789px;" width="6" height="20" viewBox="0 0 6 20"><path d="M0.5 0.5H5.5L3 3.5Z" fill="#404040"/><rect x="1" y="6" width="1" height="1" fill="#404040"/><rect x="4" y="7" width="1" height="1" fill="#404040"/><rect x="1" y="9" width="1" height="1" fill="#404040"/><rect x="4" y="10" width="1" height="1" fill="#404040"/><rect x="1" y="12" width="1" height="1" fill="#404040"/><rect x="4" y="13" width="1" height="1" fill="#404040"/><rect x="1" y="15" width="1" height="1" fill="#404040"/><rect x="4" y="16" width="1" height="1" fill="#404040"/><rect x="1" y="18" width="1" height="1" fill="#404040"/><rect x="4" y="19" width="1" height="1" fill="#404040"/></svg><div style="position:absolute;left:10px;top:789px;width:564px;height:20px;background:#fff;border-top:2px solid #404040;border-left:2px solid #404040;border-bottom:1px solid #fff;border-right:1px solid #D4D0C8"></div><div style="position:absolute;left:577px;top:789px;width:553px;height:20px;background:#929CA6;border-top:2px solid #404040;border-left:2px solid #404040;border-bottom:1px solid #fff;border-right:1px solid #fff"></div><div style="position:absolute;left:1131px;top:789px;width:20px;height:20px;background:#D4D0C8;border-top:1px solid #fff;border-left:1px solid #fff;border-right:1px solid #404040;border-bottom:1px solid #404040;box-shadow:inset -1px -1px 0 #808080"></div><svg style="position:absolute;left:1134px;top:792px;" width="14" height="13" viewBox="0 0 14 13"><rect x="0.5" y="0.5" width="13" height="12" fill="#fff" stroke="#000"/><rect x="0" y="0" width="14" height="4" fill="#000"/><rect x="1" y="6" width="12" height="2" fill="#000"/></svg><svg style="position:absolute;left:2px;top:812px;" width="6" height="21" viewBox="0 0 6 21"><path d="M0.5 0.5H5.5L3 3.5Z" fill="#404040"/><rect x="1" y="6" width="1" height="1" fill="#404040"/><rect x="4" y="7" width="1" height="1" fill="#404040"/><rect x="1" y="9" width="1" height="1" fill="#404040"/><rect x="4" y="10" width="1" height="1" fill="#404040"/><rect x="1" y="12" width="1" height="1" fill="#404040"/><rect x="4" y="13" width="1" height="1" fill="#404040"/><rect x="1" y="15" width="1" height="1" fill="#404040"/><rect x="4" y="16" width="1" height="1" fill="#404040"/><rect x="1" y="18" width="1" height="1" fill="#404040"/><rect x="4" y="19" width="1" height="1" fill="#404040"/></svg><div style="position:absolute;left:10px;top:811px;width:1141px;height:23px;border-top:1px solid #808080;border-left:1px solid #808080;border-bottom:1px solid #fff;border-right:1px solid #fff"></div><div class="t" style="left:25px;top:816px;font-size:11px">Move Tool: Select an object to move.</div><div style="position:absolute;left:0;top:834px;width:1152px;height:30px;background:#D4D0C8;border-top:1px solid #D4D0C8;box-shadow:inset 0 1px 0 #fff"></div><div style="position:absolute;left:2px;top:838px;width:46px;height:23px;background:#D4D0C8;border-top:1px solid #fff;border-left:1px solid #fff;border-right:1px solid #404040;border-bottom:1px solid #404040;box-shadow:inset -1px -1px 0 #808080"></div><svg style="position:absolute;left:6px;top:842px;" width="17" height="16" viewBox="0 0 17 16"><path d="M1 3C3 1 5 1 8 3V8C5 6 3 6 1 8Z" fill="#F05020"/><path d="M9 3C11 5 13 5 16 3V8C13 10 11 10 9 8Z" fill="#30B030"/><path d="M1 9C3 7 5 7 8 9V14C5 12 3 12 1 14Z" fill="#2060E0"/><path d="M9 9C11 11 13 11 16 9V14C13 16 11 16 9 14Z" fill="#F0C020"/></svg><div class="t" style="left:22px;top:842px;font-size:12px;letter-spacing:0px">开始</div><svg style="position:absolute;left:56px;top:840px;" width="19" height="19" viewBox="0 0 19 19"><text x="1" y="16" font-family="Liberation Serif" font-size="20" font-weight="bold" fill="#2A7AD8">e</text><path d="M1 9C5 2 17 1 17 6" stroke="#3A9AE8" stroke-width="1.5" fill="none"/></svg><svg style="position:absolute;left:79px;top:840px;" width="19" height="19" viewBox="0 0 19 19"><path d="M2 18V2L10 8L17 16Z" fill="#F0F0F0" stroke="#C08000"/><path d="M3 17L8 8L15 17Z" fill="#E04020"/><circle cx="10" cy="7" r="4" fill="none" stroke="#2050C0" stroke-width="1.5"/><path d="M13 10L17 14" stroke="#2050C0" stroke-width="2"/><rect x="12" y="14" width="6" height="4" fill="#E01010"/></svg><svg style="position:absolute;left:102px;top:840px;" width="19" height="19" viewBox="0 0 19 19"><path d="M5 2L14 1L9 8L15 8L5 18L8 11L3 11Z" fill="#F0C020" stroke="#805000" stroke-width="1"/><path d="M2 14L9 4M8 17L16 6" stroke="#E08000" stroke-width="1.2"/></svg><svg style="position:absolute;left:124px;top:840px;" width="19" height="19" viewBox="0 0 19 19"><rect x="3" y="3" width="13" height="14" rx="2" fill="#A0C8F0" stroke="#2050A0"/><path d="M6 8C6 5 13 5 13 9C13 13 6 13 6 10" stroke="#2050A0" stroke-width="2" fill="none"/><path d="M12 3L16 1V6Z" fill="#2050A0"/></svg><div class="t" style="left:163px;top:840px;font-size:13px;font-weight:bold">»</div><div style="position:absolute;left:176px;top:837px;width:160px;height:24px;background:#D4D0C8;border-top:1px solid #fff;border-left:1px solid #fff;border-right:1px solid #404040;border-bottom:1px solid #404040;box-shadow:inset -1px -1px 0 #808080"></div><svg style="position:absolute;left:182px;top:841px;" width="17" height="17" viewBox="0 0 17 17"><path d="M2 1H12L16 5V16H2Z" fill="#fff" stroke="#404040"/><circle cx="8" cy="10" r="5" fill="#2A8AE0"/><path d="M4 10H12C12 8 10 6 8 6C6 6 4 8 4 10Z" fill="#8AD0FF"/><path d="M1 8C4 4 14 3 13 7" stroke="#E0A020" stroke-width="1.3" fill="none"/></svg><div class="t" style="left:201px;top:843px;font-size:12px;letter-spacing:-0.3px">[原创]风车教程mogwai...</div><div style="position:absolute;left:338px;top:837px;width:160px;height:24px;background:repeating-conic-gradient(#fff 0 25%,#D4D0C8 0 50%) 0 0/2px 2px;border-top:1px solid #404040;border-left:1px solid #404040;border-right:1px solid #fff;border-bottom:1px solid #fff;box-shadow:inset 1px 1px 0 #808080"></div><svg style="position:absolute;left:344px;top:842px;" width="16" height="17" viewBox="0 0 16 17"><path d="M2 16V4L5 2L8 6L11 2L14 4V16L11 14V8L8 12L5 8V14Z" fill="#606060" stroke="#202020" stroke-width="0.8"/><path d="M5 4V12M11 4V12" stroke="#C0C0C0" stroke-width="0.8"/></svg><div class="t" style="left:363px;top:843px;font-size:12px;letter-spacing:-0.2px">Maya 4.0: .\untitled</div><div style="position:absolute;left:501px;top:837px;width:160px;height:24px;background:#D4D0C8;border-top:1px solid #fff;border-left:1px solid #fff;border-right:1px solid #404040;border-bottom:1px solid #404040;box-shadow:inset -1px -1px 0 #808080"></div><svg style="position:absolute;left:506px;top:842px;" width="16" height="17" viewBox="0 0 16 17"><path d="M2 16V4L5 2L8 6L11 2L14 4V16L11 14V8L8 12L5 8V14Z" fill="#606060" stroke="#202020" stroke-width="0.8"/><path d="M5 4V12M11 4V12" stroke="#C0C0C0" stroke-width="0.8"/></svg><div class="t" style="left:525px;top:843px;font-size:12px;letter-spacing:-0.2px">Output Window</div><div style="position:absolute;left:664px;top:837px;width:162px;height:24px;background:#D4D0C8;border-top:1px solid #fff;border-left:1px solid #fff;border-right:1px solid #404040;border-bottom:1px solid #404040;box-shadow:inset -1px -1px 0 #808080"></div><svg style="position:absolute;left:669px;top:841px;" width="17" height="18" viewBox="0 0 17 18"><path d="M3 2L14 2L12 16H5Z" fill="#E8E0C0" stroke="#806040"/><path d="M4 4L7 14M8 3L9 15M12 4L10 15" stroke="#E04020" stroke-width="1.5"/><path d="M6 3L9 9L13 3" stroke="#2080E0" stroke-width="1.5" fill="none"/></svg><div class="t" style="left:688px;top:843px;font-size:12px">3 - 画图</div><svg style="position:absolute;left:1000px;top:843px;" width="18" height="14" viewBox="0 0 18 14"><path d="M2 5L15 2V5Z" fill="#000"/><rect x="2" y="6" width="14" height="8" fill="#fff" stroke="#000"/><path d="M4 9H14" stroke="#000" stroke-width="1.2"/><path d="M4 4L6 6M8 3L10 5M12 2L14 4" stroke="#000"/></svg><div style="position:absolute;left:1019px;top:838px;width:2px;height:22px;border-left:1px solid #808080;border-right:1px solid #fff"></div><svg style="position:absolute;left:1027px;top:843px;" width="14" height="14" viewBox="0 0 14 14"><path d="M1 1H10L13 4V13H1Z" fill="#fff" stroke="#000"/><text x="3.5" y="11" font-family="Liberation Sans" font-size="9" font-weight="bold" fill="#000">?</text></svg><div style="position:absolute;left:1045px;top:838px;width:2px;height:22px;border-left:1px solid #808080;border-right:1px solid #fff"></div><div style="position:absolute;left:1050px;top:837px;width:100px;height:24px;border-top:1px solid #808080;border-left:1px solid #808080;border-right:1px solid #fff;border-bottom:1px solid #fff"></div><svg style="position:absolute;left:1052px;top:842px;" width="15" height="15" viewBox="0 0 15 15"><rect x="5" y="1" width="6" height="5" fill="#40A0C0" stroke="#205060" stroke-width="0.8"/><path d="M8 6V9M3 9H13" stroke="#404040"/><rect x="1" y="9" width="5" height="5" fill="#60C060" stroke="#205020" stroke-width="0.8"/><rect x="10" y="9" width="5" height="5" fill="#60C060" stroke="#205020" stroke-width="0.8"/></svg><svg style="position:absolute;left:1068px;top:842px;" width="14" height="15" viewBox="0 0 14 15"><circle cx="8" cy="4" r="3" fill="#60A0C0"/><path d="M3 14C3 8 13 8 13 14Z" fill="#4080A0"/><rect x="1" y="11" width="14" height="4" fill="#60C0C0" stroke="#206060" stroke-width="0.8"/></svg><svg style="position:absolute;left:1081px;top:842px;" width="13" height="15" viewBox="0 0 13 15"><rect x="2" y="3" width="12" height="10" fill="#5050B0" stroke="#202060" stroke-width="0.8"/><rect x="5" y="1" width="9" height="6" fill="#8080D0"/><rect x="1" y="8" width="7" height="6" fill="#303090"/></svg><svg style="position:absolute;left:1094px;top:841px;" width="15" height="17" viewBox="0 0 15 17"><rect x="1" y="6" width="14" height="10" fill="#F0E060" stroke="#000" stroke-width="1"/><path d="M4 6V3C4 1 12 1 12 3V6" fill="#202020"/><path d="M1 10H15" stroke="#000"/></svg><div class="t" style="left:1113px;top:842px;font-size:12px">23:23</div></body></html>
